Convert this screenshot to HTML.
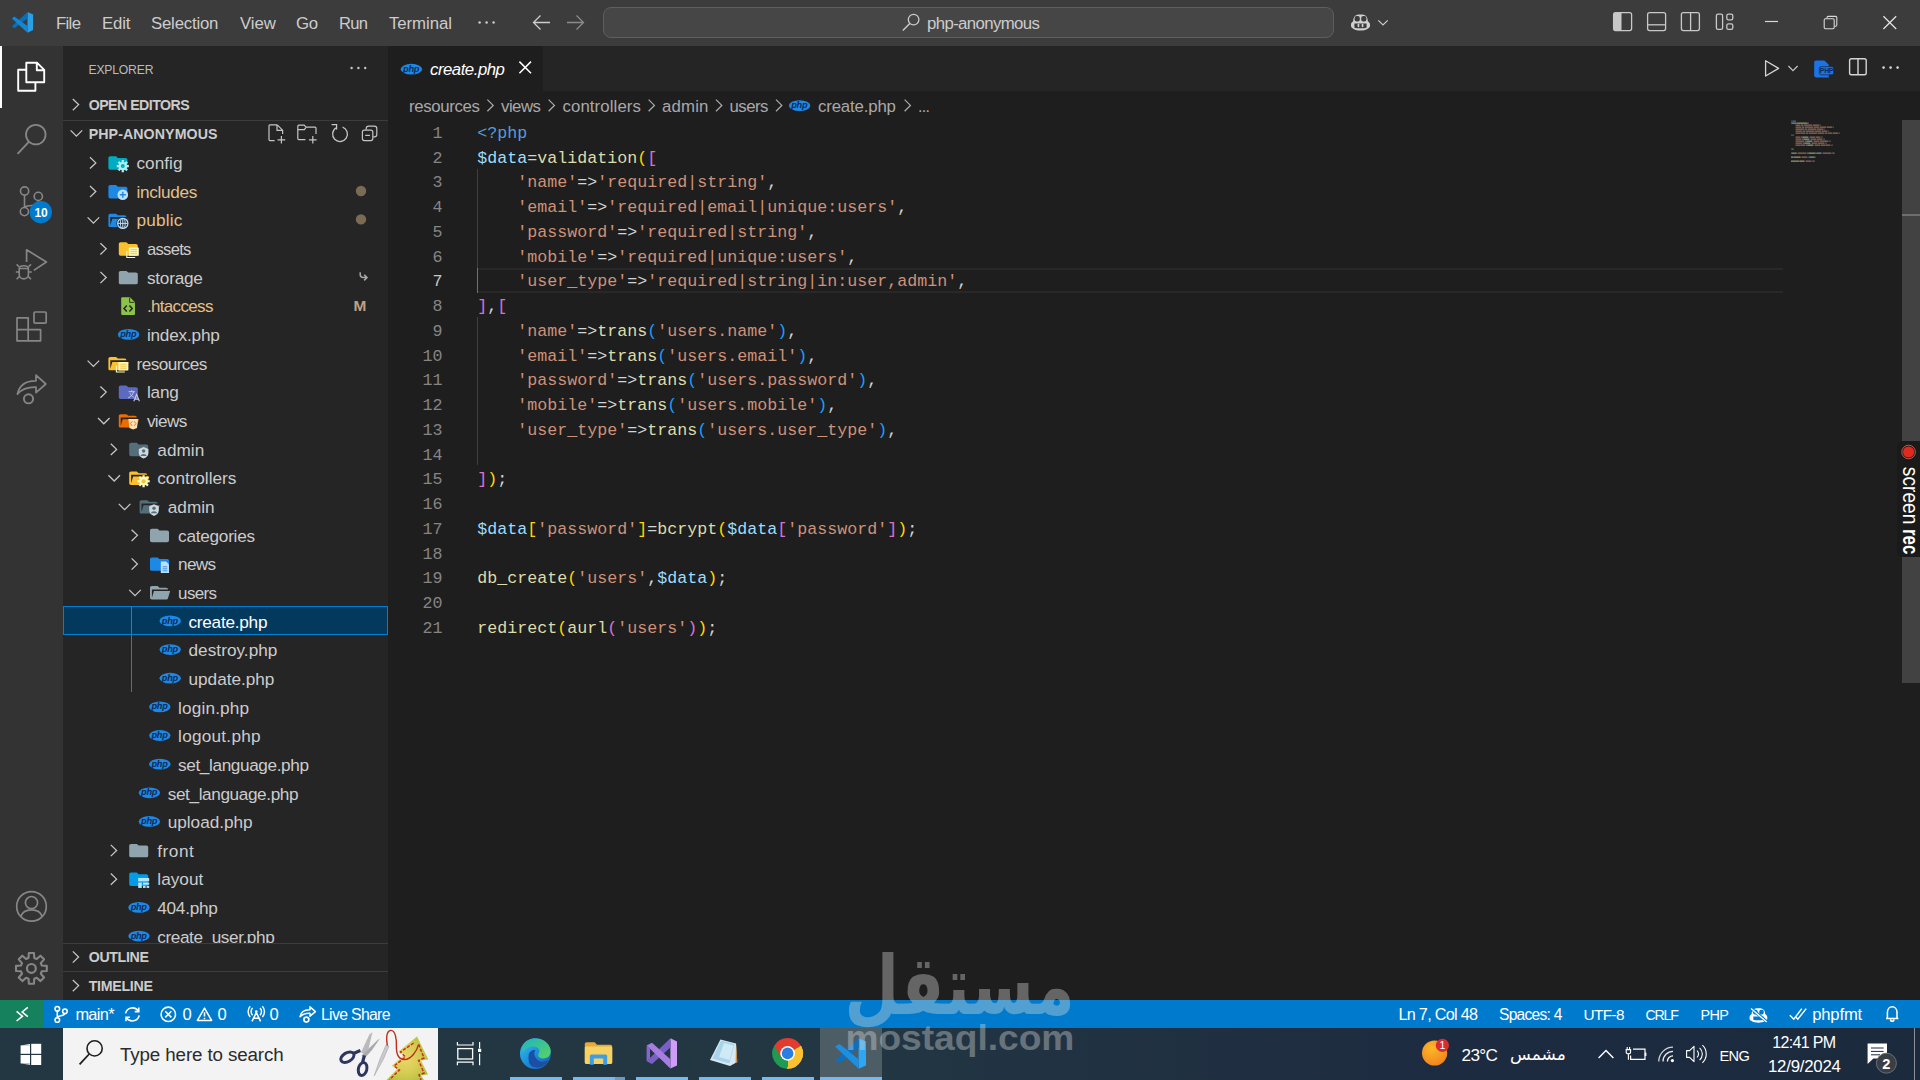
<!DOCTYPE html>
<html lang="en"><head><meta charset="utf-8"><title>create.php - php-anonymous - Visual Studio Code</title>
<style>
html,body{margin:0;padding:0;background:#1e1e1e;overflow:hidden}
#root{position:relative;width:1920px;height:1080px;overflow:hidden;background:#1e1e1e;font-family:"Liberation Sans",sans-serif}
#root div,#root span.t,#root svg,#root pre{position:absolute;display:block}
span.t{white-space:pre}
pre{margin:0}
svg{overflow:visible}
</style></head><body><div id="root">
<div style="left:0px;top:0px;width:1920px;height:46px;background:#3c3c3c;"></div>
<div style="left:0px;top:46px;width:63px;height:954px;background:#333333;"></div>
<div style="left:63px;top:46px;width:325px;height:954px;background:#252526;"></div>
<div style="left:388px;top:46px;width:1532px;height:45px;background:#252526;"></div>
<div style="left:388px;top:46px;width:155px;height:45px;background:#1e1e1e;"></div>
<div style="left:388px;top:91px;width:1532px;height:909px;background:#1e1e1e;"></div>
<div style="left:0px;top:1000px;width:1920px;height:28px;background:#007acc;"></div>
<div style="left:0px;top:1000px;width:44px;height:28px;background:#16825d;"></div>
<div style="left:0px;top:1028px;width:1920px;height:52px;background:linear-gradient(90deg,#233743 0%,#233743 42%,#1d2b40 76%,#1c2a3e 100%);"></div>
<span class="t" style="left:56.00px;top:12.00px;font:normal 400 16.8px/24px 'Liberation Sans',sans-serif;color:#cccccc;letter-spacing:-0.691px;">File</span>
<span class="t" style="left:102.00px;top:12.00px;font:normal 400 16.8px/24px 'Liberation Sans',sans-serif;color:#cccccc;letter-spacing:-0.150px;">Edit</span>
<span class="t" style="left:151.00px;top:12.00px;font:normal 400 16.8px/24px 'Liberation Sans',sans-serif;color:#cccccc;letter-spacing:-0.202px;">Selection</span>
<span class="t" style="left:240.00px;top:12.00px;font:normal 400 16.8px/24px 'Liberation Sans',sans-serif;color:#cccccc;letter-spacing:-0.037px;">View</span>
<span class="t" style="left:296.00px;top:12.00px;font:normal 400 16.8px/24px 'Liberation Sans',sans-serif;color:#cccccc;letter-spacing:-0.411px;">Go</span>
<span class="t" style="left:339.00px;top:12.00px;font:normal 400 16.6px/23px 'Liberation Sans',sans-serif;color:#cccccc;letter-spacing:-0.727px;">Run</span>
<span class="t" style="left:389.00px;top:12.00px;font:normal 400 16.8px/24px 'Liberation Sans',sans-serif;color:#cccccc;letter-spacing:-0.070px;">Terminal</span>
<div style="left:603px;top:7px;width:731px;height:31px;background:#464646;border:1px solid #5e5e5e;border-radius:8px;box-sizing:border-box;"></div>
<span class="t" style="left:927.00px;top:12.00px;font:normal 400 16.8px/24px 'Liberation Sans',sans-serif;color:#cccccc;letter-spacing:-0.624px;">php-anonymous</span>
<span class="t" style="left:88.50px;top:62.00px;font:normal 400 12.2px/17px 'Liberation Sans',sans-serif;color:#bbbbbb;letter-spacing:-0.207px;">EXPLORER</span>
<span class="t" style="left:88.70px;top:95.00px;font:normal 700 14.2px/20px 'Liberation Sans',sans-serif;color:#cccccc;letter-spacing:-0.541px;">OPEN EDITORS</span>
<div style="left:63px;top:120px;width:325px;height:1px;background:#3c3c3c;"></div>
<span class="t" style="left:88.70px;top:124.00px;font:normal 700 14.2px/20px 'Liberation Sans',sans-serif;color:#cccccc;letter-spacing:0.091px;">PHP-ANONYMOUS</span>
<div style="left:63px;top:606px;width:325px;height:29px;background:#04395e;border:1px solid #007fd4;box-sizing:border-box;"></div>
<div style="left:131px;top:606px;width:1px;height:86px;background:#6a6a6a;"></div>
<span class="t" style="left:136.50px;top:151.00px;font:normal 400 17.2px/24px 'Liberation Sans',sans-serif;color:#cccccc;letter-spacing:0.020px;">config</span>
<span class="t" style="left:136.50px;top:180.00px;font:normal 400 17.2px/24px 'Liberation Sans',sans-serif;color:#e2c08d;letter-spacing:-0.301px;">includes</span>
<span class="t" style="left:136.50px;top:208.00px;font:normal 400 17.2px/24px 'Liberation Sans',sans-serif;color:#e2c08d;letter-spacing:0.212px;">public</span>
<span class="t" style="left:146.90px;top:238.00px;font:normal 400 16.6px/23px 'Liberation Sans',sans-serif;color:#cccccc;letter-spacing:-0.695px;">assets</span>
<span class="t" style="left:146.90px;top:266.00px;font:normal 400 17.2px/24px 'Liberation Sans',sans-serif;color:#cccccc;letter-spacing:-0.229px;">storage</span>
<span class="t" style="left:146.90px;top:295.00px;font:normal 400 17.0px/24px 'Liberation Sans',sans-serif;color:#e2c08d;letter-spacing:-0.664px;">.htaccess</span>
<span class="t" style="left:146.90px;top:323.00px;font:normal 400 17.2px/24px 'Liberation Sans',sans-serif;color:#cccccc;letter-spacing:-0.200px;">index.php</span>
<span class="t" style="left:136.50px;top:352.00px;font:normal 400 17.2px/24px 'Liberation Sans',sans-serif;color:#cccccc;letter-spacing:-0.565px;">resources</span>
<span class="t" style="left:146.90px;top:380.00px;font:normal 400 17.2px/24px 'Liberation Sans',sans-serif;color:#cccccc;letter-spacing:-0.173px;">lang</span>
<span class="t" style="left:146.90px;top:409.00px;font:normal 400 17.2px/24px 'Liberation Sans',sans-serif;color:#cccccc;letter-spacing:-0.627px;">views</span>
<span class="t" style="left:157.30px;top:438.00px;font:normal 400 17.2px/24px 'Liberation Sans',sans-serif;color:#cccccc;letter-spacing:0.038px;">admin</span>
<span class="t" style="left:157.30px;top:466.00px;font:normal 400 17.2px/24px 'Liberation Sans',sans-serif;color:#cccccc;letter-spacing:-0.034px;">controllers</span>
<span class="t" style="left:167.70px;top:495.00px;font:normal 400 17.2px/24px 'Liberation Sans',sans-serif;color:#cccccc;letter-spacing:0.038px;">admin</span>
<span class="t" style="left:178.10px;top:524.00px;font:normal 400 17.2px/24px 'Liberation Sans',sans-serif;color:#cccccc;letter-spacing:-0.262px;">categories</span>
<span class="t" style="left:178.10px;top:552.00px;font:normal 400 17.2px/24px 'Liberation Sans',sans-serif;color:#cccccc;letter-spacing:-0.718px;">news</span>
<span class="t" style="left:178.10px;top:582.00px;font:normal 400 17.0px/24px 'Liberation Sans',sans-serif;color:#cccccc;letter-spacing:-0.643px;">users</span>
<span class="t" style="left:188.50px;top:610.00px;font:normal 400 17.2px/24px 'Liberation Sans',sans-serif;color:#ffffff;letter-spacing:-0.254px;">create.php</span>
<span class="t" style="left:188.50px;top:638.00px;font:normal 400 17.2px/24px 'Liberation Sans',sans-serif;color:#cccccc;letter-spacing:0.039px;">destroy.php</span>
<span class="t" style="left:188.50px;top:667.00px;font:normal 400 17.2px/24px 'Liberation Sans',sans-serif;color:#cccccc;letter-spacing:-0.010px;">update.php</span>
<span class="t" style="left:178.10px;top:696.00px;font:normal 400 17.2px/24px 'Liberation Sans',sans-serif;color:#cccccc;letter-spacing:0.148px;">login.php</span>
<span class="t" style="left:178.10px;top:724.00px;font:normal 400 17.2px/24px 'Liberation Sans',sans-serif;color:#cccccc;letter-spacing:0.240px;">logout.php</span>
<span class="t" style="left:178.10px;top:753.00px;font:normal 400 17.2px/24px 'Liberation Sans',sans-serif;color:#cccccc;letter-spacing:-0.385px;">set_language.php</span>
<span class="t" style="left:167.70px;top:782.00px;font:normal 400 17.2px/24px 'Liberation Sans',sans-serif;color:#cccccc;letter-spacing:-0.385px;">set_language.php</span>
<span class="t" style="left:167.70px;top:810.00px;font:normal 400 17.2px/24px 'Liberation Sans',sans-serif;color:#cccccc;letter-spacing:-0.014px;">upload.php</span>
<span class="t" style="left:157.30px;top:839.00px;font:normal 400 17.2px/24px 'Liberation Sans',sans-serif;color:#cccccc;letter-spacing:0.521px;">front</span>
<span class="t" style="left:157.30px;top:867.00px;font:normal 400 17.2px/24px 'Liberation Sans',sans-serif;color:#cccccc;letter-spacing:0.020px;">layout</span>
<span class="t" style="left:157.30px;top:896.00px;font:normal 400 17.2px/24px 'Liberation Sans',sans-serif;color:#cccccc;letter-spacing:-0.279px;">404.php</span>
<span class="t" style="left:157.30px;top:925.00px;font:normal 400 17.2px/24px 'Liberation Sans',sans-serif;color:#cccccc;letter-spacing:-0.419px;">create_user.php</span>
<div style="left:63px;top:943px;width:325px;height:57px;background:#252526;"></div>
<div style="left:63px;top:943px;width:325px;height:1px;background:#3c3c3c;"></div>
<span class="t" style="left:88.70px;top:947.00px;font:normal 700 14.2px/20px 'Liberation Sans',sans-serif;color:#cccccc;letter-spacing:-0.337px;">OUTLINE</span>
<div style="left:63px;top:971px;width:325px;height:1px;background:#3c3c3c;"></div>
<span class="t" style="left:88.70px;top:976.00px;font:normal 700 14.2px/20px 'Liberation Sans',sans-serif;color:#cccccc;letter-spacing:-0.281px;">TIMELINE</span>
<span class="t" style="left:430.00px;top:58.00px;font:italic 400 16.8px/24px 'Liberation Sans',sans-serif;color:#ffffff;letter-spacing:-0.488px;">create.php</span>
<span class="t" style="left:409.00px;top:95.00px;font:normal 400 16.8px/24px 'Liberation Sans',sans-serif;color:#a9a9a9;letter-spacing:-0.346px;">resources</span>
<span class="t" style="left:501.00px;top:95.00px;font:normal 400 16.8px/24px 'Liberation Sans',sans-serif;color:#a9a9a9;letter-spacing:-0.502px;">views</span>
<span class="t" style="left:562.50px;top:95.00px;font:normal 400 16.8px/24px 'Liberation Sans',sans-serif;color:#a9a9a9;letter-spacing:0.100px;">controllers</span>
<span class="t" style="left:662.00px;top:95.00px;font:normal 400 16.8px/24px 'Liberation Sans',sans-serif;color:#a9a9a9;letter-spacing:0.185px;">admin</span>
<span class="t" style="left:729.50px;top:95.00px;font:normal 400 16.8px/24px 'Liberation Sans',sans-serif;color:#a9a9a9;letter-spacing:-0.521px;">users</span>
<span class="t" style="left:818.00px;top:95.00px;font:normal 400 16.8px/24px 'Liberation Sans',sans-serif;color:#a9a9a9;letter-spacing:-0.155px;">create.php</span>
<span class="t" style="left:918.00px;top:96.00px;font:normal 400 16.0px/22px 'Liberation Sans',sans-serif;color:#a9a9a9;letter-spacing:-0.668px;">...</span>
<div style="left:477px;top:268px;width:1306px;height:2px;background:#282828;"></div>
<div style="left:477px;top:291px;width:1306px;height:2px;background:#282828;"></div>
<div style="left:477px;top:169px;width:1px;height:99px;background:#404040;"></div>
<div style="left:477px;top:268px;width:1px;height:25px;background:#707070;"></div>
<div style="left:477px;top:317px;width:1px;height:148px;background:#404040;"></div>
<span class="t" style="left:432.50px;top:122.00px;font:normal 400 16.66px/23px 'Liberation Mono',monospace;color:#858585;letter-spacing:0.003px;">1</span>
<pre style="left:477.3px;top:122.00px;font:16.66px/23px 'Liberation Mono',monospace;letter-spacing:0.003px;"><span style="color:#569cd6">&lt;?php</span></pre>
<span class="t" style="left:432.50px;top:147.00px;font:normal 400 16.66px/23px 'Liberation Mono',monospace;color:#858585;letter-spacing:0.003px;">2</span>
<pre style="left:477.3px;top:147.00px;font:16.66px/23px 'Liberation Mono',monospace;letter-spacing:0.003px;"><span style="color:#9cdcfe">$data</span><span style="color:#d4d4d4">=</span><span style="color:#dcdcaa">validation</span><span style="color:#ffd700">(</span><span style="color:#da70d6">[</span></pre>
<span class="t" style="left:432.50px;top:171.00px;font:normal 400 16.66px/23px 'Liberation Mono',monospace;color:#858585;letter-spacing:0.003px;">3</span>
<pre style="left:477.3px;top:171.00px;font:16.66px/23px 'Liberation Mono',monospace;letter-spacing:0.003px;"><span style="color:#d4d4d4">    </span><span style="color:#ce9178">&#x27;name&#x27;</span><span style="color:#d4d4d4">=&gt;</span><span style="color:#ce9178">&#x27;required|string&#x27;</span><span style="color:#d4d4d4">,</span></pre>
<span class="t" style="left:432.50px;top:196.00px;font:normal 400 16.66px/23px 'Liberation Mono',monospace;color:#858585;letter-spacing:0.003px;">4</span>
<pre style="left:477.3px;top:196.00px;font:16.66px/23px 'Liberation Mono',monospace;letter-spacing:0.003px;"><span style="color:#d4d4d4">    </span><span style="color:#ce9178">&#x27;email&#x27;</span><span style="color:#d4d4d4">=&gt;</span><span style="color:#ce9178">&#x27;required|email|unique:users&#x27;</span><span style="color:#d4d4d4">,</span></pre>
<span class="t" style="left:432.50px;top:221.00px;font:normal 400 16.66px/23px 'Liberation Mono',monospace;color:#858585;letter-spacing:0.003px;">5</span>
<pre style="left:477.3px;top:221.00px;font:16.66px/23px 'Liberation Mono',monospace;letter-spacing:0.003px;"><span style="color:#d4d4d4">    </span><span style="color:#ce9178">&#x27;password&#x27;</span><span style="color:#d4d4d4">=&gt;</span><span style="color:#ce9178">&#x27;required|string&#x27;</span><span style="color:#d4d4d4">,</span></pre>
<span class="t" style="left:432.50px;top:246.00px;font:normal 400 16.66px/23px 'Liberation Mono',monospace;color:#858585;letter-spacing:0.003px;">6</span>
<pre style="left:477.3px;top:246.00px;font:16.66px/23px 'Liberation Mono',monospace;letter-spacing:0.003px;"><span style="color:#d4d4d4">    </span><span style="color:#ce9178">&#x27;mobile&#x27;</span><span style="color:#d4d4d4">=&gt;</span><span style="color:#ce9178">&#x27;required|unique:users&#x27;</span><span style="color:#d4d4d4">,</span></pre>
<span class="t" style="left:432.50px;top:270.00px;font:normal 400 16.66px/23px 'Liberation Mono',monospace;color:#c6c6c6;letter-spacing:0.003px;">7</span>
<pre style="left:477.3px;top:270.00px;font:16.66px/23px 'Liberation Mono',monospace;letter-spacing:0.003px;"><span style="color:#d4d4d4">    </span><span style="color:#ce9178">&#x27;user_type&#x27;</span><span style="color:#d4d4d4">=&gt;</span><span style="color:#ce9178">&#x27;required|string|in:user,admin&#x27;</span><span style="color:#d4d4d4">,</span></pre>
<span class="t" style="left:432.50px;top:295.00px;font:normal 400 16.66px/23px 'Liberation Mono',monospace;color:#858585;letter-spacing:0.003px;">8</span>
<pre style="left:477.3px;top:295.00px;font:16.66px/23px 'Liberation Mono',monospace;letter-spacing:0.003px;"><span style="color:#da70d6">]</span><span style="color:#d4d4d4">,</span><span style="color:#da70d6">[</span></pre>
<span class="t" style="left:432.50px;top:320.00px;font:normal 400 16.66px/23px 'Liberation Mono',monospace;color:#858585;letter-spacing:0.003px;">9</span>
<pre style="left:477.3px;top:320.00px;font:16.66px/23px 'Liberation Mono',monospace;letter-spacing:0.003px;"><span style="color:#d4d4d4">    </span><span style="color:#ce9178">&#x27;name&#x27;</span><span style="color:#d4d4d4">=&gt;</span><span style="color:#dcdcaa">trans</span><span style="color:#179fff">(</span><span style="color:#ce9178">&#x27;users.name&#x27;</span><span style="color:#179fff">)</span><span style="color:#d4d4d4">,</span></pre>
<span class="t" style="left:422.50px;top:345.00px;font:normal 400 16.66px/23px 'Liberation Mono',monospace;color:#858585;letter-spacing:0.003px;">10</span>
<pre style="left:477.3px;top:345.00px;font:16.66px/23px 'Liberation Mono',monospace;letter-spacing:0.003px;"><span style="color:#d4d4d4">    </span><span style="color:#ce9178">&#x27;email&#x27;</span><span style="color:#d4d4d4">=&gt;</span><span style="color:#dcdcaa">trans</span><span style="color:#179fff">(</span><span style="color:#ce9178">&#x27;users.email&#x27;</span><span style="color:#179fff">)</span><span style="color:#d4d4d4">,</span></pre>
<span class="t" style="left:422.50px;top:369.00px;font:normal 400 16.66px/23px 'Liberation Mono',monospace;color:#858585;letter-spacing:0.003px;">11</span>
<pre style="left:477.3px;top:369.00px;font:16.66px/23px 'Liberation Mono',monospace;letter-spacing:0.003px;"><span style="color:#d4d4d4">    </span><span style="color:#ce9178">&#x27;password&#x27;</span><span style="color:#d4d4d4">=&gt;</span><span style="color:#dcdcaa">trans</span><span style="color:#179fff">(</span><span style="color:#ce9178">&#x27;users.password&#x27;</span><span style="color:#179fff">)</span><span style="color:#d4d4d4">,</span></pre>
<span class="t" style="left:422.50px;top:394.00px;font:normal 400 16.66px/23px 'Liberation Mono',monospace;color:#858585;letter-spacing:0.003px;">12</span>
<pre style="left:477.3px;top:394.00px;font:16.66px/23px 'Liberation Mono',monospace;letter-spacing:0.003px;"><span style="color:#d4d4d4">    </span><span style="color:#ce9178">&#x27;mobile&#x27;</span><span style="color:#d4d4d4">=&gt;</span><span style="color:#dcdcaa">trans</span><span style="color:#179fff">(</span><span style="color:#ce9178">&#x27;users.mobile&#x27;</span><span style="color:#179fff">)</span><span style="color:#d4d4d4">,</span></pre>
<span class="t" style="left:422.50px;top:419.00px;font:normal 400 16.66px/23px 'Liberation Mono',monospace;color:#858585;letter-spacing:0.003px;">13</span>
<pre style="left:477.3px;top:419.00px;font:16.66px/23px 'Liberation Mono',monospace;letter-spacing:0.003px;"><span style="color:#d4d4d4">    </span><span style="color:#ce9178">&#x27;user_type&#x27;</span><span style="color:#d4d4d4">=&gt;</span><span style="color:#dcdcaa">trans</span><span style="color:#179fff">(</span><span style="color:#ce9178">&#x27;users.user_type&#x27;</span><span style="color:#179fff">)</span><span style="color:#d4d4d4">,</span></pre>
<span class="t" style="left:422.50px;top:444.00px;font:normal 400 16.66px/23px 'Liberation Mono',monospace;color:#858585;letter-spacing:0.003px;">14</span>
<span class="t" style="left:422.50px;top:468.00px;font:normal 400 16.66px/23px 'Liberation Mono',monospace;color:#858585;letter-spacing:0.003px;">15</span>
<pre style="left:477.3px;top:468.00px;font:16.66px/23px 'Liberation Mono',monospace;letter-spacing:0.003px;"><span style="color:#da70d6">]</span><span style="color:#ffd700">)</span><span style="color:#d4d4d4">;</span></pre>
<span class="t" style="left:422.50px;top:493.00px;font:normal 400 16.66px/23px 'Liberation Mono',monospace;color:#858585;letter-spacing:0.003px;">16</span>
<span class="t" style="left:422.50px;top:518.00px;font:normal 400 16.66px/23px 'Liberation Mono',monospace;color:#858585;letter-spacing:0.003px;">17</span>
<pre style="left:477.3px;top:518.00px;font:16.66px/23px 'Liberation Mono',monospace;letter-spacing:0.003px;"><span style="color:#9cdcfe">$data</span><span style="color:#ffd700">[</span><span style="color:#ce9178">&#x27;password&#x27;</span><span style="color:#ffd700">]</span><span style="color:#d4d4d4">=</span><span style="color:#dcdcaa">bcrypt</span><span style="color:#ffd700">(</span><span style="color:#9cdcfe">$data</span><span style="color:#da70d6">[</span><span style="color:#ce9178">&#x27;password&#x27;</span><span style="color:#da70d6">]</span><span style="color:#ffd700">)</span><span style="color:#d4d4d4">;</span></pre>
<span class="t" style="left:422.50px;top:543.00px;font:normal 400 16.66px/23px 'Liberation Mono',monospace;color:#858585;letter-spacing:0.003px;">18</span>
<span class="t" style="left:422.50px;top:567.00px;font:normal 400 16.66px/23px 'Liberation Mono',monospace;color:#858585;letter-spacing:0.003px;">19</span>
<pre style="left:477.3px;top:567.00px;font:16.66px/23px 'Liberation Mono',monospace;letter-spacing:0.003px;"><span style="color:#dcdcaa">db_create</span><span style="color:#ffd700">(</span><span style="color:#ce9178">&#x27;users&#x27;</span><span style="color:#d4d4d4">,</span><span style="color:#9cdcfe">$data</span><span style="color:#ffd700">)</span><span style="color:#d4d4d4">;</span></pre>
<span class="t" style="left:422.50px;top:592.00px;font:normal 400 16.66px/23px 'Liberation Mono',monospace;color:#858585;letter-spacing:0.003px;">20</span>
<span class="t" style="left:422.50px;top:617.00px;font:normal 400 16.66px/23px 'Liberation Mono',monospace;color:#858585;letter-spacing:0.003px;">21</span>
<pre style="left:477.3px;top:617.00px;font:16.66px/23px 'Liberation Mono',monospace;letter-spacing:0.003px;"><span style="color:#dcdcaa">redirect</span><span style="color:#ffd700">(</span><span style="color:#dcdcaa">aurl</span><span style="color:#da70d6">(</span><span style="color:#ce9178">&#x27;users&#x27;</span><span style="color:#da70d6">)</span><span style="color:#ffd700">)</span><span style="color:#d4d4d4">;</span></pre>
<div style="left:1902px;top:120px;width:18px;height:563px;background:#424242;"></div>
<div style="left:1902px;top:214px;width:18px;height:2px;background:#6e6e6e;"></div>
<span class="t" style="left:75.40px;top:1003.00px;font:normal 400 16.4px/23px 'Liberation Sans',sans-serif;color:#ffffff;letter-spacing:-0.683px;">main*</span>
<span class="t" style="left:182.50px;top:1003.00px;font:normal 400 16.6px/23px 'Liberation Sans',sans-serif;color:#ffffff;">0</span>
<span class="t" style="left:217.50px;top:1003.00px;font:normal 400 16.6px/23px 'Liberation Sans',sans-serif;color:#ffffff;">0</span>
<span class="t" style="left:269.50px;top:1003.00px;font:normal 400 16.6px/23px 'Liberation Sans',sans-serif;color:#ffffff;">0</span>
<span class="t" style="left:321.00px;top:1004.00px;font:normal 400 15.8px/22px 'Liberation Sans',sans-serif;color:#ffffff;letter-spacing:-0.671px;">Live Share</span>
<span class="t" style="left:1398.50px;top:1003.00px;font:normal 400 16.2px/23px 'Liberation Sans',sans-serif;color:#ffffff;letter-spacing:-0.715px;">Ln 7, Col 48</span>
<span class="t" style="left:1499.00px;top:1004.00px;font:normal 400 15.6px/22px 'Liberation Sans',sans-serif;color:#ffffff;letter-spacing:-0.735px;">Spaces: 4</span>
<span class="t" style="left:1583.50px;top:1004.00px;font:normal 400 15.4px/22px 'Liberation Sans',sans-serif;color:#ffffff;letter-spacing:-0.658px;">UTF-8</span>
<span class="t" style="left:1645.50px;top:1005.00px;font:normal 400 14.2px/20px 'Liberation Sans',sans-serif;color:#ffffff;letter-spacing:-1.235px;">CRLF</span>
<span class="t" style="left:1700.40px;top:1005.00px;font:normal 400 14.4px/20px 'Liberation Sans',sans-serif;color:#ffffff;letter-spacing:-0.605px;">PHP</span>
<span class="t" style="left:1812.20px;top:1003.00px;font:normal 400 16.6px/23px 'Liberation Sans',sans-serif;color:#ffffff;letter-spacing:-0.150px;">phpfmt</span>
<div style="left:63px;top:1028px;width:375px;height:52px;background:#f3f3f3;"></div>
<span class="t" style="left:120.00px;top:1042.00px;font:normal 400 18.8px/26px 'Liberation Sans',sans-serif;color:#2b2b2b;letter-spacing:-0.134px;">Type here to search</span>
<div style="left:820px;top:1028px;width:62px;height:49px;background:#4d5d66;"></div>
<div style="left:510px;top:1077px;width:52px;height:3px;background:#76b9ed;"></div>
<div style="left:573px;top:1077px;width:41.5px;height:3px;background:#76b9ed;"></div>
<div style="left:636px;top:1077px;width:52px;height:3px;background:#76b9ed;"></div>
<div style="left:699px;top:1077px;width:52px;height:3px;background:#76b9ed;"></div>
<div style="left:762px;top:1077px;width:52px;height:3px;background:#76b9ed;"></div>
<div style="left:820px;top:1077px;width:62px;height:3px;background:#76b9ed;"></div>
<div style="left:614.5px;top:1077px;width:10.5px;height:3px;background:#6a9bbf;"></div>
<span class="t" style="left:1461.50px;top:1043.00px;font:normal 400 17.2px/24px 'Liberation Sans',sans-serif;color:#ffffff;letter-spacing:-0.644px;">23°C</span>
<span class="t" style="left:1510.00px;top:1042.00px;font:normal 400 17px/24px 'DejaVu Sans','Liberation Sans',sans-serif;color:#ffffff;">مشمس</span>
<span class="t" style="left:1719.40px;top:1046.00px;font:normal 400 14.6px/20px 'Liberation Sans',sans-serif;color:#ffffff;letter-spacing:-0.619px;">ENG</span>
<span class="t" style="left:1772.30px;top:1032.00px;font:normal 400 16.0px/22px 'Liberation Sans',sans-serif;color:#ffffff;letter-spacing:-0.684px;">12:41 PM</span>
<span class="t" style="left:1768.00px;top:1055.00px;font:normal 400 16.8px/24px 'Liberation Sans',sans-serif;color:#ffffff;letter-spacing:-0.218px;">12/9/2024</span>
<div style="left:0px;top:46px;width:2px;height:62px;background:#ffffff;"></div>
<span class="t" style="left:33.60px;top:203.90px;font:normal 700 11.8px/17px 'Liberation Sans',sans-serif;color:#ffffff;letter-spacing:1.674px;">10</span>
<svg style="left:0;top:0" width="1920" height="1080" viewBox="0 0 1920 1080" fill="none" stroke-linecap="butt"><path d="M27.5,11.9 L33.1,14.6 V30.1 L27.5,32.8 Z" fill="#2b9fe6"  /><path d="M27.5,11.9 V18.6 L14.4,28.2 L11.9,26.3 Z" fill="#0a6fb8"  /><path d="M27.5,32.8 V26.1 L14.4,16.5 L11.9,18.4 Z" fill="#1487d4"  /><circle cx="479.6" cy="22.6" r="1.25" fill="#cccccc"  /><circle cx="486.6" cy="22.6" r="1.25" fill="#cccccc"  /><circle cx="493.6" cy="22.6" r="1.25" fill="#cccccc"  /><path d="M533.5,22.5 H550 M540.5,15.5 L533.5,22.5 L540.5,29.5" fill="none" stroke="#cccccc" stroke-width="1.3" /><path d="M567,22.5 H583.5 M576.5,15.5 L583.5,22.5 L576.5,29.5" fill="none" stroke="#8b8b8b" stroke-width="1.3" /><circle cx="913.6" cy="19.6" r="5.3" fill="none" stroke="#cccccc" stroke-width="1.3" /><path d="M909.8,23.4 L902.8,30.6" fill="none" stroke="#cccccc" stroke-width="1.4" /><g transform="translate(1351,13)"><path d="M2.2,8.2 C2.2,3.2 4.6,1.4 9.5,1.4 C14.4,1.4 16.8,3.2 16.8,8.2 C18.2,9 19,10 19,11.4 V13.2 C19,14.6 15,17.6 9.5,17.6 C4,17.6 0,14.6 0,13.2 V11.4 C0,10 0.8,9 2.2,8.2 Z" fill="#d0d0d0"  /><rect x="3.6" y="3" width="5.2" height="5.6" rx="2" fill="#3c3c3c"  /><rect x="10.2" y="3" width="5.2" height="5.6" rx="2" fill="#3c3c3c"  /><path d="M3.4,10.4 H15.6 V14.4 C13,15.6 6,15.6 3.4,14.4 Z" fill="#3c3c3c"  /><rect x="6.6" y="10.8" width="1.7" height="3.4" rx="0.8" fill="#d0d0d0"  /><rect x="10.7" y="10.8" width="1.7" height="3.4" rx="0.8" fill="#d0d0d0"  /></g><path d="M1378.3,20.3 L1383,25 L1387.7,20.3" fill="none" stroke="#cccccc" stroke-width="1.2" /><rect x="1613.6" y="12.6" width="18" height="18" rx="2" fill="none" stroke="#c8c8c8" stroke-width="1.3" /><path d="M1614,13 h7.5 v17.2 h-7.5 z" fill="#c8c8c8"  /><rect x="1647.6" y="12.6" width="18" height="18" rx="2" fill="none" stroke="#c8c8c8" stroke-width="1.3" /><path d="M1648,24.8 H1665.4" fill="none" stroke="#c8c8c8" stroke-width="1.3" /><rect x="1681.4" y="12.6" width="18" height="18" rx="2" fill="none" stroke="#c8c8c8" stroke-width="1.3" /><path d="M1690.6,13 V30.4" fill="none" stroke="#c8c8c8" stroke-width="1.3" /><rect x="1716.4" y="14.2" width="6.2" height="15.2" rx="1.6" fill="none" stroke="#c8c8c8" stroke-width="1.3" /><rect x="1726.8" y="14.2" width="6" height="5.6" rx="1.6" fill="none" stroke="#c8c8c8" stroke-width="1.3" /><rect x="1726.8" y="23.8" width="6" height="5.6" rx="1.6" fill="none" stroke="#c8c8c8" stroke-width="1.3" /><path d="M1765,21.5 H1778" fill="none" stroke="#d8d8d8" stroke-width="1.2" /><rect x="1824.2" y="18.8" width="10" height="10" rx="1.2" fill="none" stroke="#d8d8d8" stroke-width="1.1" /><path d="M1827,18.6 V17.6 Q1827,16.4 1828.2,16.4 H1835.6 Q1836.8,16.4 1836.8,17.6 V25 Q1836.8,26.2 1835.6,26.2 H1834.6" fill="none" stroke="#d8d8d8" stroke-width="1.1" /><path d="M1883.4,16.2 L1896.2,29 M1896.2,16.2 L1883.4,29" fill="none" stroke="#e0e0e0" stroke-width="1.3" /><path d="M26.3,62.8 H37.2 L44.2,69.8 V82.2 H26.3 Z M36.8,63 V70.2 H44" fill="none" stroke="#ffffff" stroke-width="1.9" stroke-linejoin="round"/><path d="M26,69.8 H18.2 V90.8 H35.4 V82.6" fill="none" stroke="#ffffff" stroke-width="1.9" stroke-linejoin="round"/><circle cx="35.8" cy="134.6" r="9.8" fill="none" stroke="#868686" stroke-width="1.8" /><path d="M28.8,141.8 L17.6,153.8" fill="none" stroke="#868686" stroke-width="1.9" /><circle cx="24.6" cy="191" r="4.1" fill="none" stroke="#868686" stroke-width="1.6" /><circle cx="38.3" cy="196.4" r="4.1" fill="none" stroke="#868686" stroke-width="1.6" /><circle cx="24.4" cy="211.6" r="4.1" fill="none" stroke="#868686" stroke-width="1.6" /><path d="M24.5,195.2 V207.4 M38.3,200.6 C38.3,205 34,205.6 30,205.8 C26.5,206 24.5,206.6 24.5,207.6" fill="none" stroke="#868686" stroke-width="1.6" /><circle cx="40.8" cy="212.2" r="11.2" fill="#007acc"  /><path d="M26.6,262 V249.8 L46.4,262 L33.8,270.4" fill="none" stroke="#868686" stroke-width="1.7" stroke-linejoin="round"/><path d="M19.2,268.6 C19.2,264.8 28.4,264.8 28.4,268.6 V274.2 C28.4,280.4 19.2,280.4 19.2,274.2 Z" fill="none" stroke="#868686" stroke-width="1.6" /><path d="M19.2,268.4 H28.4 M19,266.6 L16.6,264.4 M28.6,266.6 L31,264.4 M19,272 H15.8 M28.6,272 H31.8 M19.4,276.4 L16.6,279.2 M28.2,276.4 L31,279.2" fill="none" stroke="#868686" stroke-width="1.5" /><path d="M17,317.8 H28.2 V329.6 H40.6 V340.8 H17 Z M17,329.6 H28.2 V340.8" fill="none" stroke="#868686" stroke-width="1.7" stroke-linejoin="round"/><rect x="34" y="312" width="12.2" height="11.2" rx="1.2" fill="none" stroke="#868686" stroke-width="1.7" /><path d="M17.4,394.2 C19.4,385 26.6,380.6 36,380.8 V375.2 L45.8,384 L36,392.6 V387.2 C28,387 22,388.6 17.4,394.2 Z" fill="none" stroke="#868686" stroke-width="1.7" stroke-linejoin="round"/><circle cx="28.5" cy="398.8" r="4.6" fill="none" stroke="#868686" stroke-width="1.9" /><circle cx="31.5" cy="906.4" r="14.8" fill="none" stroke="#868686" stroke-width="1.7" /><circle cx="31.5" cy="902.6" r="6.1" fill="none" stroke="#868686" stroke-width="1.7" /><path d="M20.8,916.6 C23.6,907.6 39.4,907.6 42.2,916.6" fill="none" stroke="#868686" stroke-width="1.7" /><path d="M28.84,953.01 L33.96,953.01 L34.27,957.99 L36.73,959.01 L40.47,955.71 L44.09,959.33 L40.79,963.07 L41.81,965.53 L46.79,965.84 L46.79,970.96 L41.81,971.27 L40.79,973.73 L44.09,977.47 L40.47,981.09 L36.73,977.79 L34.27,978.81 L33.96,983.79 L28.84,983.79 L28.53,978.81 L26.07,977.79 L22.33,981.09 L18.71,977.47 L22.01,973.73 L20.99,971.27 L16.01,970.96 L16.01,965.84 L20.99,965.53 L22.01,963.07 L18.71,959.33 L22.33,955.71 L26.07,959.01 L28.53,957.99 Z" fill="none" stroke="#868686" stroke-width="2.1" stroke-linejoin="round"/><circle cx="31.4" cy="968.4" r="4.4" fill="none" stroke="#868686" stroke-width="2.2" /><text x="40.9" y="216.6" font-family="'Liberation Sans',sans-serif" font-size="12" font-weight="700" font-style="normal" fill="#ffffff" text-anchor="middle" letter-spacing="-0.3">10</text><circle cx="351.6" cy="68" r="1.2" fill="#c5c5c5"  /><circle cx="358.4" cy="68" r="1.2" fill="#c5c5c5"  /><circle cx="365.2" cy="68" r="1.2" fill="#c5c5c5"  /><path d="M72.80,99.00 L78.60,104.60 L72.80,110.20" fill="none" stroke="#c5c5c5" stroke-width="1.3" /><path d="M70.60,130.40 L76.40,136.20 L82.20,130.40" fill="none" stroke="#c5c5c5" stroke-width="1.3" /><path d="M72.80,951.40 L78.60,957.00 L72.80,962.60" fill="none" stroke="#c5c5c5" stroke-width="1.3" /><path d="M72.80,980.00 L78.60,985.60 L72.80,991.20" fill="none" stroke="#c5c5c5" stroke-width="1.3" /><path d="M277.2,124.8 H270 Q269,124.8 269,125.8 V139.6 Q269,140.6 270,140.6 H274.6 M277.2,124.8 L282.6,130.2 V134 M277,125 V130.4 H282.4" fill="none" stroke="#c5c5c5" stroke-width="1.2" /><path d="M281.4,136 V143.6 M277.6,139.8 H285.2" fill="none" stroke="#c5c5c5" stroke-width="1.2" /><path d="M305.4,139.6 H298.8 Q297.8,139.6 297.8,138.6 V126.2 Q297.8,125.2 298.8,125.2 H304.2 L306,127.2 H315 Q316,127.2 316,128.2 V134 M297.8,129.6 H304.4 L306,127.4" fill="none" stroke="#c5c5c5" stroke-width="1.2" /><path d="M312.8,136 V143.6 M309,139.8 H316.6" fill="none" stroke="#c5c5c5" stroke-width="1.2" /><path d="M336.2,127.8 A7.4,7.4 0 1 0 342.6,127.2" fill="none" stroke="#c5c5c5" stroke-width="1.3" /><path d="M331.6,124.6 H336.6 V129.6" fill="none" stroke="#c5c5c5" stroke-width="1.2" /><rect x="362.4" y="130.2" width="10.4" height="10.4" rx="2" fill="none" stroke="#c5c5c5" stroke-width="1.2" /><path d="M365.2,135.4 H370" fill="none" stroke="#c5c5c5" stroke-width="1.2" /><path d="M366.2,129.8 V128.6 Q366.2,126.2 368.6,126.2 H374.4 Q376.8,126.2 376.8,128.6 V134.4 Q376.8,136.8 374.4,136.8 H373.2" fill="none" stroke="#c5c5c5" stroke-width="1.2" /><clipPath id="treeclip"><rect x="63" y="148" width="325" height="795"/></clipPath><g clip-path="url(#treeclip)"><path d="M90.00,157.30 L95.80,162.90 L90.00,168.50" fill="none" stroke="#c5c5c5" stroke-width="1.3" /><path transform="translate(106.50,152.97) scale(0.95,0.84)" d="M10 4H4c-1.11 0-2 .89-2 2v12a2 2 0 0 0 2 2h16a2 2 0 0 0 2-2V8c0-1.11-.9-2-2-2h-8l-2-2z" fill="#00acc1"/><path d="M121.59,160.02 L124.01,160.02 L123.84,161.93 L125.01,162.41 L126.24,160.94 L127.96,162.66 L126.49,163.89 L126.97,165.06 L128.88,164.89 L128.88,167.31 L126.97,167.14 L126.49,168.31 L127.96,169.54 L126.24,171.26 L125.01,169.79 L123.84,170.27 L124.01,172.18 L121.59,172.18 L121.76,170.27 L120.59,169.79 L119.36,171.26 L117.64,169.54 L119.11,168.31 L118.63,167.14 L116.72,167.31 L116.72,164.89 L118.63,165.06 L119.11,163.89 L117.64,162.66 L119.36,160.94 L120.59,162.41 L121.76,161.93 Z" fill="#b2ebf2"  /><circle cx="122.80000000000001" cy="166.1" r="2" fill="#00acc1"  /><path d="M90.00,185.95 L95.80,191.55 L90.00,197.15" fill="none" stroke="#c5c5c5" stroke-width="1.3" /><path transform="translate(106.50,181.62) scale(0.95,0.84)" d="M10 4H4c-1.11 0-2 .89-2 2v12a2 2 0 0 0 2 2h16a2 2 0 0 0 2-2V8c0-1.11-.9-2-2-2h-8l-2-2z" fill="#1e88e5"/><circle cx="122.80000000000001" cy="194.75" r="5.3" fill="#bbdefb"  /><path d="M119.80000000000001,194.75 H125.80000000000001 M122.80000000000001,191.75 V197.75" fill="none" stroke="#1e88e5" stroke-width="1.4" /><path d="M87.60,217.40 L93.40,223.20 L99.20,217.40" fill="none" stroke="#c5c5c5" stroke-width="1.3" /><path transform="translate(106.50,210.27) scale(0.95,0.84)" d="M19 20H4c-1.11 0-2-.9-2-2V6c0-1.11.89-2 2-2h6l2 2h7a2 2 0 0 1 2 2H4v10l2.14-8h17.07l-2.28 8.5c-.23.87-1.01 1.5-1.93 1.5z" fill="#1e88e5"/><circle cx="122.80000000000001" cy="223.4" r="6.4" fill="#252526"  /><circle cx="122.80000000000001" cy="223.4" r="5.1" fill="none" stroke="#bbdefb" stroke-width="1.2" /><path d="M117.80000000000001,223.4 H127.80000000000001 M122.80000000000001,218.4 V228.4" fill="none" stroke="#bbdefb" stroke-width="1" /><ellipse cx="122.80000000000001" cy="223.4" rx="2.4" ry="5" stroke="#bbdefb" stroke-width="1" fill="none"/><path d="M100.40,243.25 L106.20,248.85 L100.40,254.45" fill="none" stroke="#c5c5c5" stroke-width="1.3" /><path transform="translate(116.90,238.92) scale(0.95,0.84)" d="M10 4H4c-1.11 0-2 .89-2 2v12a2 2 0 0 0 2 2h16a2 2 0 0 0 2-2V8c0-1.11-.9-2-2-2h-8l-2-2z" fill="#fbc02d"/><path d="M126.80000000000001,251.04999999999998 V257.45 H135.20000000000002" fill="none" stroke="#fff9c4" stroke-width="1.1" /><rect x="128.8" y="247.45" width="10" height="8.4" rx="0.6" fill="#fff9c4"  /><path d="M130.60000000000002,249.64999999999998 H137.00000000000003 M130.60000000000002,251.64999999999998 H137.00000000000003 M130.60000000000002,253.64999999999998 H137.00000000000003" fill="none" stroke="#fbc02d" stroke-width="0.9" /><path d="M100.40,271.90 L106.20,277.50 L100.40,283.10" fill="none" stroke="#c5c5c5" stroke-width="1.3" /><path transform="translate(116.90,267.57) scale(0.95,0.84)" d="M10 4H4c-1.11 0-2 .89-2 2v12a2 2 0 0 0 2 2h16a2 2 0 0 0 2-2V8c0-1.11-.9-2-2-2h-8l-2-2z" fill="#90a4ae"/><path d="M122.4,297.15 H130.0 L135.0,302.15 V313.75 Q135.0,314.95 133.8,314.95 H122.4 Q121.2,314.95 121.2,313.75 V298.34999999999997 Q121.2,297.15 122.4,297.15 Z" fill="#8bc34a"  /><path d="M129.6,297.75 V302.34999999999997 H134.4" fill="none" stroke="#252526" stroke-width="0.9" /><path d="M126.8,305.54999999999995 L124.0,308.54999999999995 L126.8,311.54999999999995 M129.4,305.54999999999995 L132.2,308.54999999999995 L129.4,311.54999999999995" fill="none" stroke="#252526" stroke-width="1.5" /><ellipse cx="128.60" cy="334.40" rx="10.7" ry="5.4" fill="#1e88e5"/><text x="128.29999999999998" y="337.0" font-family="'Liberation Sans',sans-serif" font-size="9.2" font-weight="700" font-style="italic" fill="#0f2a55" text-anchor="middle" letter-spacing="-0.25">php</text><path d="M87.60,360.65 L93.40,366.45 L99.20,360.65" fill="none" stroke="#c5c5c5" stroke-width="1.3" /><path transform="translate(106.50,353.52) scale(0.95,0.84)" d="M19 20H4c-1.11 0-2-.9-2-2V6c0-1.11.89-2 2-2h6l2 2h7a2 2 0 0 1 2 2H4v10l2.14-8h17.07l-2.28 8.5c-.23.87-1.01 1.5-1.93 1.5z" fill="#fbc02d"/><path d="M116.4,365.65 V372.04999999999995 H124.80000000000001" fill="none" stroke="#fff9c4" stroke-width="1.1" /><rect x="118.4" y="362.04999999999995" width="10" height="8.4" rx="0.6" fill="#fff9c4"  /><path d="M120.20000000000002,364.25 H126.60000000000001 M120.20000000000002,366.25 H126.60000000000001 M120.20000000000002,368.25 H126.60000000000001" fill="none" stroke="#fbc02d" stroke-width="0.9" /><path d="M100.40,386.50 L106.20,392.10 L100.40,397.70" fill="none" stroke="#c5c5c5" stroke-width="1.3" /><path transform="translate(116.90,382.17) scale(0.95,0.84)" d="M10 4H4c-1.11 0-2 .89-2 2v12a2 2 0 0 0 2 2h16a2 2 0 0 0 2-2V8c0-1.11-.9-2-2-2h-8l-2-2z" fill="#5c6bc0"/><path d="M128.60000000000002,391.7 H134.8 M131.70000000000002,390.3 V391.7 M133.60000000000002,391.7 C132.8,394.7 130.60000000000002,396.7 128.20000000000002,397.90000000000003 M130.00000000000003,393.3 C130.8,395.1 132.20000000000002,396.5 133.8,397.3" fill="none" stroke="#c5cae9" stroke-width="1" /><path d="M133.8,401.3 L136.60000000000002,394.5 L139.4,401.3 M134.8,399.1 H138.4" fill="none" stroke="#c5cae9" stroke-width="1.1" /><path d="M98.00,417.95 L103.80,423.75 L109.60,417.95" fill="none" stroke="#c5c5c5" stroke-width="1.3" /><path transform="translate(116.90,410.82) scale(0.95,0.84)" d="M19 20H4c-1.11 0-2-.9-2-2V6c0-1.11.89-2 2-2h6l2 2h7a2 2 0 0 1 2 2H4v10l2.14-8h17.07l-2.28 8.5c-.23.87-1.01 1.5-1.93 1.5z" fill="#ef6c00"/><path d="M128.4,418.95 H138.00000000000003 L137.00000000000003,427.95 L133.20000000000002,429.55 L129.4,427.95 Z" fill="#ffe0b2"  /><path d="M132.20000000000002,421.34999999999997 L130.4,423.55 L132.20000000000002,425.75 M134.20000000000002,421.34999999999997 L136.00000000000003,423.55 L134.20000000000002,425.75" fill="none" stroke="#ef6c00" stroke-width="0.9" /><path d="M110.80,443.80 L116.60,449.40 L110.80,455.00" fill="none" stroke="#c5c5c5" stroke-width="1.3" /><path transform="translate(127.30,439.47) scale(0.95,0.84)" d="M10 4H4c-1.11 0-2 .89-2 2v12a2 2 0 0 0 2 2h16a2 2 0 0 0 2-2V8c0-1.11-.9-2-2-2h-8l-2-2z" fill="#546e7a"/><path d="M143.60000000000002,447.0 L148.40000000000003,449.0 V453.0 C148.40000000000003,456.0 146.20000000000002,457.8 143.60000000000002,458.6 C141.00000000000003,457.8 138.8,456.0 138.8,453.0 V449.0 Z" fill="#cfd8dc"  /><circle cx="143.60000000000002" cy="451.0" r="1.7" fill="#546e7a"  /><path d="M140.60000000000002,456.0 C140.60000000000002,453.20000000000005 146.60000000000002,453.20000000000005 146.60000000000002,456.0 Z" fill="#546e7a"  /><path d="M108.40,475.25 L114.20,481.05 L120.00,475.25" fill="none" stroke="#c5c5c5" stroke-width="1.3" /><path transform="translate(127.30,468.12) scale(0.95,0.84)" d="M19 20H4c-1.11 0-2-.9-2-2V6c0-1.11.89-2 2-2h6l2 2h7a2 2 0 0 1 2 2H4v10l2.14-8h17.07l-2.28 8.5c-.23.87-1.01 1.5-1.93 1.5z" fill="#fbc02d"/><path d="M142.39,475.17 L144.81,475.17 L144.64,477.08 L145.81,477.56 L147.04,476.09 L148.76,477.81 L147.29,479.04 L147.77,480.21 L149.68,480.04 L149.68,482.46 L147.77,482.29 L147.29,483.46 L148.76,484.69 L147.04,486.41 L145.81,484.94 L144.64,485.42 L144.81,487.33 L142.39,487.33 L142.56,485.42 L141.39,484.94 L140.16,486.41 L138.44,484.69 L139.91,483.46 L139.43,482.29 L137.52,482.46 L137.52,480.04 L139.43,480.21 L139.91,479.04 L138.44,477.81 L140.16,476.09 L141.39,477.56 L142.56,477.08 Z" fill="#fff9c4"  /><circle cx="143.60000000000002" cy="481.25" r="2" fill="#fbc02d"  /><path d="M118.80,503.90 L124.60,509.70 L130.40,503.90" fill="none" stroke="#c5c5c5" stroke-width="1.3" /><path transform="translate(137.70,496.77) scale(0.95,0.84)" d="M19 20H4c-1.11 0-2-.9-2-2V6c0-1.11.89-2 2-2h6l2 2h7a2 2 0 0 1 2 2H4v10l2.14-8h17.07l-2.28 8.5c-.23.87-1.01 1.5-1.93 1.5z" fill="#546e7a"/><path d="M154.00000000000003,504.29999999999995 L158.80000000000004,506.29999999999995 V510.29999999999995 C158.80000000000004,513.3 156.60000000000002,515.1 154.00000000000003,515.9 C151.40000000000003,515.1 149.20000000000002,513.3 149.20000000000002,510.29999999999995 V506.29999999999995 Z" fill="#cfd8dc"  /><circle cx="154.00000000000003" cy="508.29999999999995" r="1.7" fill="#546e7a"  /><path d="M151.00000000000003,513.3 C151.00000000000003,510.5 157.00000000000003,510.5 157.00000000000003,513.3 Z" fill="#546e7a"  /><path d="M131.60,529.75 L137.40,535.35 L131.60,540.95" fill="none" stroke="#c5c5c5" stroke-width="1.3" /><path transform="translate(148.10,525.42) scale(0.95,0.84)" d="M10 4H4c-1.11 0-2 .89-2 2v12a2 2 0 0 0 2 2h16a2 2 0 0 0 2-2V8c0-1.11-.9-2-2-2h-8l-2-2z" fill="#90a4ae"/><path d="M131.60,558.40 L137.40,564.00 L131.60,569.60" fill="none" stroke="#c5c5c5" stroke-width="1.3" /><path transform="translate(148.10,554.07) scale(0.95,0.84)" d="M10 4H4c-1.11 0-2 .89-2 2v12a2 2 0 0 0 2 2h16a2 2 0 0 0 2-2V8c0-1.11-.9-2-2-2h-8l-2-2z" fill="#1e88e5"/><path d="M160.8,561.5999999999999 H166.20000000000002 L169.0,564.4 V572.9999999999999 H160.8 Z" fill="#bbdefb"  /><path d="M162.6,566.8 H167.20000000000002 M162.6,568.8 H167.20000000000002 M162.6,570.8 H167.20000000000002" fill="none" stroke="#1e88e5" stroke-width="0.8" /><path d="M129.20,589.85 L135.00,595.65 L140.80,589.85" fill="none" stroke="#c5c5c5" stroke-width="1.3" /><path transform="translate(148.10,582.72) scale(0.95,0.84)" d="M19 20H4c-1.11 0-2-.9-2-2V6c0-1.11.89-2 2-2h6l2 2h7a2 2 0 0 1 2 2H4v10l2.14-8h17.07l-2.28 8.5c-.23.87-1.01 1.5-1.93 1.5z" fill="#90a4ae"/><ellipse cx="170.20" cy="620.90" rx="10.7" ry="5.4" fill="#1e88e5"/><text x="169.89999999999998" y="623.5" font-family="'Liberation Sans',sans-serif" font-size="9.2" font-weight="700" font-style="italic" fill="#0f2a55" text-anchor="middle" letter-spacing="-0.25">php</text><ellipse cx="170.20" cy="649.55" rx="10.7" ry="5.4" fill="#1e88e5"/><text x="169.89999999999998" y="652.15" font-family="'Liberation Sans',sans-serif" font-size="9.2" font-weight="700" font-style="italic" fill="#0f2a55" text-anchor="middle" letter-spacing="-0.25">php</text><ellipse cx="170.20" cy="678.20" rx="10.7" ry="5.4" fill="#1e88e5"/><text x="169.89999999999998" y="680.8" font-family="'Liberation Sans',sans-serif" font-size="9.2" font-weight="700" font-style="italic" fill="#0f2a55" text-anchor="middle" letter-spacing="-0.25">php</text><ellipse cx="159.80" cy="706.85" rx="10.7" ry="5.4" fill="#1e88e5"/><text x="159.5" y="709.45" font-family="'Liberation Sans',sans-serif" font-size="9.2" font-weight="700" font-style="italic" fill="#0f2a55" text-anchor="middle" letter-spacing="-0.25">php</text><ellipse cx="159.80" cy="735.50" rx="10.7" ry="5.4" fill="#1e88e5"/><text x="159.5" y="738.1" font-family="'Liberation Sans',sans-serif" font-size="9.2" font-weight="700" font-style="italic" fill="#0f2a55" text-anchor="middle" letter-spacing="-0.25">php</text><ellipse cx="159.80" cy="764.15" rx="10.7" ry="5.4" fill="#1e88e5"/><text x="159.5" y="766.75" font-family="'Liberation Sans',sans-serif" font-size="9.2" font-weight="700" font-style="italic" fill="#0f2a55" text-anchor="middle" letter-spacing="-0.25">php</text><ellipse cx="149.40" cy="792.80" rx="10.7" ry="5.4" fill="#1e88e5"/><text x="149.1" y="795.4" font-family="'Liberation Sans',sans-serif" font-size="9.2" font-weight="700" font-style="italic" fill="#0f2a55" text-anchor="middle" letter-spacing="-0.25">php</text><ellipse cx="149.40" cy="821.45" rx="10.7" ry="5.4" fill="#1e88e5"/><text x="149.1" y="824.05" font-family="'Liberation Sans',sans-serif" font-size="9.2" font-weight="700" font-style="italic" fill="#0f2a55" text-anchor="middle" letter-spacing="-0.25">php</text><path d="M110.80,844.90 L116.60,850.50 L110.80,856.10" fill="none" stroke="#c5c5c5" stroke-width="1.3" /><path transform="translate(127.30,840.57) scale(0.95,0.84)" d="M10 4H4c-1.11 0-2 .89-2 2v12a2 2 0 0 0 2 2h16a2 2 0 0 0 2-2V8c0-1.11-.9-2-2-2h-8l-2-2z" fill="#90a4ae"/><path d="M110.80,873.55 L116.60,879.15 L110.80,884.75" fill="none" stroke="#c5c5c5" stroke-width="1.3" /><path transform="translate(127.30,869.22) scale(0.95,0.84)" d="M10 4H4c-1.11 0-2 .89-2 2v12a2 2 0 0 0 2 2h16a2 2 0 0 0 2-2V8c0-1.11-.9-2-2-2h-8l-2-2z" fill="#039be5"/><rect x="138.20000000000002" y="877.95" width="11" height="3.4" rx="0" fill="#b3e5fc"  /><rect x="138.20000000000002" y="882.5500000000001" width="3.6" height="5.4" rx="0" fill="#b3e5fc"  /><rect x="143.00000000000003" y="882.5500000000001" width="6.2" height="2.2" rx="0" fill="#b3e5fc"  /><rect x="143.00000000000003" y="885.75" width="2.6" height="2.2" rx="0" fill="#b3e5fc"  /><rect x="146.60000000000002" y="885.75" width="2.6" height="2.2" rx="0" fill="#b3e5fc"  /><ellipse cx="139.00" cy="907.40" rx="10.7" ry="5.4" fill="#1e88e5"/><text x="138.7" y="910.0" font-family="'Liberation Sans',sans-serif" font-size="9.2" font-weight="700" font-style="italic" fill="#0f2a55" text-anchor="middle" letter-spacing="-0.25">php</text><ellipse cx="139.00" cy="936.05" rx="10.7" ry="5.4" fill="#1e88e5"/><text x="138.7" y="938.65" font-family="'Liberation Sans',sans-serif" font-size="9.2" font-weight="700" font-style="italic" fill="#0f2a55" text-anchor="middle" letter-spacing="-0.25">php</text></g><circle cx="361" cy="191" r="5.2" fill="#7a6b52"  /><circle cx="361" cy="219.4" r="5.2" fill="#7a6b52"  /><text x="353.4" y="310.6" font-family="'Liberation Sans',sans-serif" font-size="15.4" font-weight="700" font-style="normal" fill="#bda28a" text-anchor="start" >M</text><path d="M360.2,272.2 V274.6 Q360.2,277.6 363.2,277.6 H366.6 M364.2,274.8 L367,277.6 L364.2,280.4" fill="none" stroke="#a8a8a8" stroke-width="1.5" /><ellipse cx="411.40" cy="69.20" rx="10.7" ry="5.4" fill="#1e88e5"/><text x="411.09999999999997" y="71.8" font-family="'Liberation Sans',sans-serif" font-size="9.2" font-weight="700" font-style="italic" fill="#0f2a55" text-anchor="middle" letter-spacing="-0.25">php</text><path d="M519.4,61.6 L531,73.2 M531,61.6 L519.4,73.2" fill="none" stroke="#ffffff" stroke-width="1.5" /><path d="M1765.6,60.8 V76 L1778.6,68.4 Z" fill="none" stroke="#d4d4d4" stroke-width="1.3" stroke-linejoin="round"/><path d="M1788.4,66 L1793,70.6 L1797.6,66" fill="none" stroke="#c5c5c5" stroke-width="1.2" /><path d="M1816,60.4 H1824.4 L1828.8,64.8 V77.4 H1816 Q1814.2,77.4 1814.2,75.6 V62.2 Q1814.2,60.4 1816,60.4 Z" fill="#1a73e8"  /><rect x="1819.4" y="66.6" width="14.2" height="8.2" rx="1.6" fill="#1a73e8" stroke="#1f1f1f" stroke-width="0.6" /><text x="1826.5" y="73.4" font-family="'Liberation Sans',sans-serif" font-size="6.8" font-weight="700" font-style="normal" fill="#0b2a5c" text-anchor="middle" letter-spacing="-0.2">PHP</text><rect x="1849.6" y="58.8" width="16.6" height="16" rx="1.8" fill="none" stroke="#d4d4d4" stroke-width="1.4" /><path d="M1858,59 V74.8" fill="none" stroke="#d4d4d4" stroke-width="1.4" /><circle cx="1883.6" cy="67.6" r="1.3" fill="#d4d4d4"  /><circle cx="1890.6" cy="67.6" r="1.3" fill="#d4d4d4"  /><circle cx="1897.6" cy="67.6" r="1.3" fill="#d4d4d4"  /><path d="M487.4,99.60000000000001 L493.2,105.4 L487.4,111.2" fill="none" stroke="#a8a8a8" stroke-width="1.3" /><path d="M548.6,99.60000000000001 L554.4,105.4 L548.6,111.2" fill="none" stroke="#a8a8a8" stroke-width="1.3" /><path d="M648.6,99.60000000000001 L654.4,105.4 L648.6,111.2" fill="none" stroke="#a8a8a8" stroke-width="1.3" /><path d="M716,99.60000000000001 L721.8,105.4 L716,111.2" fill="none" stroke="#a8a8a8" stroke-width="1.3" /><path d="M776,99.60000000000001 L781.8,105.4 L776,111.2" fill="none" stroke="#a8a8a8" stroke-width="1.3" /><path d="M904.6,99.60000000000001 L910.4,105.4 L904.6,111.2" fill="none" stroke="#a8a8a8" stroke-width="1.3" /><ellipse cx="799.60" cy="105.60" rx="10.7" ry="5.4" fill="#1e88e5"/><text x="799.3000000000001" y="108.19999999999999" font-family="'Liberation Sans',sans-serif" font-size="9.2" font-weight="700" font-style="italic" fill="#0f2a55" text-anchor="middle" letter-spacing="-0.25">php</text><path d="M16.6,1011.4 L22.4,1016.2 L16.6,1021 M27.8,1007.4 L22.2,1012 L27.8,1016.6" fill="none" stroke="#ffffff" stroke-width="1.6" /><circle cx="57.3" cy="1008.8" r="2.3" fill="none" stroke="#ffffff" stroke-width="1.55" /><circle cx="57.3" cy="1020" r="2.3" fill="none" stroke="#ffffff" stroke-width="1.55" /><circle cx="64.9" cy="1011.2" r="2.3" fill="none" stroke="#ffffff" stroke-width="1.55" /><path d="M57.3,1011.2 V1017.6 M64.9,1013.6 C64.9,1016.4 57.4,1015.2 57.4,1017.6" fill="none" stroke="#ffffff" stroke-width="1.55" /><path d="M125.6,1013.4 A7,7 0 0 1 138.4,1011.2 M139.2,1015.4 A7,7 0 0 1 126.4,1017.6" fill="none" stroke="#ffffff" stroke-width="1.6" /><path d="M138.8,1007.6 V1011.6 H134.8 M126,1021.2 V1017.2 H130" fill="none" stroke="#ffffff" stroke-width="1.55" /><circle cx="168.3" cy="1014.3" r="7.2" fill="none" stroke="#ffffff" stroke-width="1.55" /><path d="M165.2,1011.2 L171.4,1017.4 M171.4,1011.2 L165.2,1017.4" fill="none" stroke="#ffffff" stroke-width="1.55" /><path d="M204.5,1008.2 L211.6,1020.4 H197.4 Z" fill="none" stroke="#ffffff" stroke-width="1.55" stroke-linejoin="round"/><path d="M204.5,1012.2 V1016.6 M204.5,1017.8 V1019.2" fill="none" stroke="#ffffff" stroke-width="1.55" /><path d="M256.3,1012.6 L252,1021.4 M256.3,1012.6 L260.6,1021.4 M253.6,1018.2 H259" fill="none" stroke="#ffffff" stroke-width="1.55" /><circle cx="256.3" cy="1011.6" r="1.3" fill="#ffffff"  /><path d="M252.6,1008 A5,5 0 0 0 252.6,1015.2 M260,1008 A5,5 0 0 1 260,1015.2 M250.2,1006.2 A8,8 0 0 0 250.2,1017 M262.4,1006.2 A8,8 0 0 1 262.4,1017" fill="none" stroke="#ffffff" stroke-width="1.45" /><path d="M300,1016.8 C301,1011.8 305,1009.6 310,1009.8 V1006.8 L315.4,1011.6 L310,1016.2 V1013.2 C305.6,1013 302.6,1014 300,1016.8 Z" fill="none" stroke="#ffffff" stroke-width="1.55" stroke-linejoin="round"/><circle cx="306.4" cy="1019.6" r="2.5" fill="none" stroke="#ffffff" stroke-width="1.6" /><g transform="translate(1749.6,1007.2) scale(0.93)"><path d="M2.2,7.6 C2.2,3 4.6,1 9.5,1 C14.4,1 16.8,3 16.8,7.6 C18.2,8.4 19,9.4 19,10.8 V12.6 C19,14 15,16.6 9.5,16.6 C4,16.6 0,14 0,12.6 V10.8 C0,9.4 0.8,8.4 2.2,7.6 Z" fill="#ffffff"  /><rect x="3.8" y="2.8" width="4.8" height="5" rx="1.8" fill="#007acc"  /><rect x="10.4" y="2.8" width="4.8" height="5" rx="1.8" fill="#007acc"  /><path d="M4,10 H15 V13.4 C12.6,14.4 6.4,14.4 4,13.4 Z" fill="#007acc"  /><path d="M1,0.6 L18.6,15.8" fill="none" stroke="#007acc" stroke-width="3.2" /><path d="M1.6,1.4 L18.4,16" fill="none" stroke="#ffffff" stroke-width="1.5" /></g><path d="M1789.8,1015.2 L1793.8,1019.2 L1801.8,1008.6 M1795.8,1017 L1797.8,1019.2 L1806.2,1008.6" fill="none" stroke="#ffffff" stroke-width="1.45" /><path d="M1886,1018.4 H1898.4 M1887.4,1018.2 V1012.6 C1887.4,1004.8 1897,1004.8 1897,1012.6 V1018.2 M1890.6,1019.4 C1890.6,1021.8 1893.8,1021.8 1893.8,1019.4" fill="none" stroke="#ffffff" stroke-width="1.55" /><rect x="20.6" y="1045.4" width="9.4" height="8.4" rx="0" fill="#ffffff"  /><rect x="31.2" y="1043.8" width="10" height="10" rx="0" fill="#ffffff"  /><rect x="20.6" y="1055" width="9.4" height="8.4" rx="0" fill="#ffffff"  /><rect x="31.2" y="1055" width="10" height="10" rx="0" fill="#ffffff"  /><path d="M20.6,1045.4 L30,1044 V1045.4 Z M20.6,1063.4 L30,1064.8 V1063.4 Z" fill="#ffffff"  /><circle cx="94.6" cy="1048.4" r="7.6" fill="none" stroke="#1f1f1f" stroke-width="1.6" /><path d="M89.2,1054 L79.6,1064.4" fill="none" stroke="#1f1f1f" stroke-width="1.8" /><defs><radialGradient id="tree" cx="0.45" cy="0.5" r="0.6"><stop offset="0" stop-color="#ecd66a"/><stop offset="0.6" stop-color="#d4cc52"/><stop offset="1" stop-color="#b4c242"/></radialGradient></defs><path d="M361,1052.6 L369.4,1034.6 L372.4,1032.2 L368.4,1049.6 L365,1054.6 Z" fill="#b9b9be"  /><path d="M361.6,1055.4 L377.6,1040 L380,1038.6 L372,1050 L364.4,1058.4 Z" fill="#a9a9b0"  /><ellipse cx="347.4" cy="1057.2" rx="7.2" ry="4.4" transform="rotate(-30 347.4 1057.2)" stroke="#2e3560" stroke-width="3" fill="none"/><ellipse cx="362.6" cy="1069" rx="4.2" ry="6.6" transform="rotate(14 362.6 1069)" stroke="#2e3560" stroke-width="3" fill="none"/><path d="M353.4,1053.4 L360.4,1050.6 M362.6,1062.4 L364.4,1055.4" fill="none" stroke="#2e3560" stroke-width="3.2" /><path d="M386.2,1044.6 L389,1046.2 L383,1060 L374.2,1075.8 L380,1059 Z" fill="#c9c9ce" stroke="#9a9aa0" stroke-width="0.5" /><path d="M417,1036.6 L428.4,1059.6 L421,1060.6 L428,1074.6 L421,1075.6 L424,1080 H386.6 L397.6,1068.4 L391.6,1066 L404.6,1054.6 L398.6,1051.6 Z" fill="url(#tree)"  /><path d="M413.6,1043 L400.4,1052 L405.4,1057 L394,1066 L399.4,1070 L389.6,1079.6" fill="none" stroke="#c0341e" stroke-width="1.5" stroke-dasharray="3.2 1.6"/><path d="M418.6,1044.4 L424,1058 L418.6,1060.4 L424,1073 L419,1075 L421,1080" fill="none" stroke="#c0341e" stroke-width="1.5" stroke-dasharray="3.2 1.6"/><path d="M387.4,1045.6 C385.4,1034 388,1030.4 391,1030.4 C395.6,1030.4 396.6,1040 396.4,1046 C396.2,1054 398.4,1059.4 404.6,1059.6 C411,1059.4 416.4,1052 418.6,1044.6" fill="none" stroke="#b8301c" stroke-width="1.4" /><path d="M457.4,1042 V1045 H473 V1042 M457.4,1065.2 V1062.2 H473 V1065.2" fill="none" stroke="#ffffff" stroke-width="1.2" /><rect x="457.8" y="1048.6" width="14.8" height="10.4" rx="0" fill="none" stroke="#ffffff" stroke-width="1.3" /><path d="M479.6,1042 V1048.6 M479.6,1053.4 V1065.2" fill="none" stroke="#ffffff" stroke-width="1.2" /><rect x="478" y="1048.8" width="3.2" height="3.2" rx="0" fill="#ffffff"  /><defs><linearGradient id="eg" x1="0" y1="0" x2="1" y2="1"><stop offset="0" stop-color="#35c1f1"/><stop offset="0.5" stop-color="#1b8fdb"/><stop offset="1" stop-color="#1356b8"/></linearGradient><linearGradient id="eg2" x1="0" y1="0" x2="1" y2="1"><stop offset="0" stop-color="#1fb4c4"/><stop offset="1" stop-color="#5bd35b"/></linearGradient></defs><circle cx="535.4" cy="1053.6" r="15.4" fill="url(#eg)"  /><path d="M524,1043.4 C530,1036 546,1036.4 550.2,1048 C552,1054 549,1059 542,1058.4 C538,1058 537.6,1055 539,1052.6 C540.4,1050 538,1046.6 533,1046.6 C529,1046.6 525,1049 523,1053 C522,1049 522.4,1046 524,1043.4 Z" fill="url(#eg2)"  /><path d="M528.6,1056 C528.6,1052 532,1049.4 535.6,1050 C533.6,1052 534,1056 537,1059.4 C540,1062.4 545,1062.4 548.6,1060 C546,1066 538,1069.6 531.6,1066 C528.6,1063.6 528.4,1059.6 528.6,1056 Z" fill="#1a4fa3"  /><path d="M584.8,1044 Q584.8,1042.2 586.6,1042.2 H594.6 L597,1044.8 H610.4 Q612.2,1044.8 612.2,1046.6 V1062.2 Q612.2,1064 610.4,1064 H586.6 Q584.8,1064 584.8,1062.2 Z" fill="#e7a83c"  /><rect x="584.8" y="1046.4" width="27.4" height="17.6" rx="1.4" fill="#f6d264"  /><path d="M589.8,1064.8 V1056 Q589.8,1054.4 591.4,1054.4 H605.6 Q607.2,1054.4 607.2,1056 V1064.8 H603.2 V1058.6 H593.8 V1064.8 Z" fill="#3c9ee6"  /><path d="M670.4,1038.2 L677,1041.4 V1065.4 L670.4,1068.6 Z" fill="#cf9cf7"  /><path d="M670.4,1038.2 V1047.6 L652,1064 L646.6,1061.2 Z" fill="#7a5fc4"  /><path d="M670.4,1068.6 V1059.2 L652,1042.8 L646.6,1045.6 Z" fill="#a77de0"  /><path d="M646.6,1045.6 L650,1048.6 V1058.2 L646.6,1061.2 Z" fill="#8866cc"  /><path d="M720.4,1039.4 L736,1043.4 L737.2,1062 L730,1066 L710,1060 Z" fill="#d9e7ee"  /><path d="M721,1040.6 L734.6,1044.2 L729.4,1063.6 L712.4,1058.6 Z" fill="#a8d4ea"  /><path d="M724,1043 L733.6,1045.4 L729.6,1060 L719,1057 Z" fill="#cfe9f5"  /><path d="M736,1043.4 L737.4,1062 L735.6,1063 Z" fill="#c98a4a"  /><path d="M787.6,1053.4 L774.26,1045.70 A15.4,15.4 0 0 1 800.94,1045.70 Z" fill="#e33b2e"  /><path d="M787.6,1053.4 L800.94,1045.70 A15.4,15.4 0 0 1 787.60,1068.80 Z" fill="#f9c22e"  /><path d="M787.6,1053.4 L787.60,1068.80 A15.4,15.4 0 0 1 774.26,1045.70 Z" fill="#1e9a52"  /><path d="M774.26,1045.70 L781.00,1057.00 L787.60,1046.00 H800.90 L800.94,1045.70 Z" fill="#e33b2e"  /><path d="M800.94,1045.70 L794.20,1057.00 L786.60,1068.40 L787.60,1068.80 A15.4,15.4 0 0 0 800.94,1045.70 Z" fill="#f9c22e"  /><circle cx="787.6" cy="1053.4" r="7.3" fill="#ffffff"  /><circle cx="787.6" cy="1053.4" r="5.8" fill="#2a7de1"  /><path d="M858.6,1038.2 L866,1041.6 V1065.4 L858.6,1068.8 Z" fill="#2da7f4"  /><path d="M858.6,1038.2 V1047.8 L839.6,1063 L835,1060.4 Z" fill="#0f6fbd"  /><path d="M858.6,1068.8 V1059.2 L839.6,1044 L835,1046.6 Z" fill="#1c8fe0"  /><defs><radialGradient id="sun" cx="0.4" cy="0.3" r="0.8"><stop offset="0" stop-color="#fbb829"/><stop offset="1" stop-color="#f07f1c"/></radialGradient></defs><circle cx="1434.6" cy="1053" r="12.6" fill="url(#sun)"  /><circle cx="1442.4" cy="1045.4" r="6.6" fill="#d92c2c"  /><text x="1442.4" y="1049.4" font-family="'Liberation Sans',sans-serif" font-size="10.6" font-weight="400" font-style="normal" fill="#ffffff" text-anchor="middle" >1</text><path d="M1598.6,1058 L1606,1050.4 L1613.4,1058" fill="none" stroke="#ffffff" stroke-width="1.4" /><path d="M1633,1049.2 H1645 V1059.4 H1630.6 V1055.6" fill="none" stroke="#ffffff" stroke-width="1.2" /><path d="M1645.6,1052.6 V1056" fill="none" stroke="#ffffff" stroke-width="1.6" /><path d="M1627.2,1047 V1049.4 M1629.6,1047 V1049.4 M1626.2,1049.6 H1630.6 V1052 Q1630.6,1053.8 1628.4,1053.8 Q1626.2,1053.8 1626.2,1052 Z M1628.4,1053.8 V1059.8" fill="none" stroke="#ffffff" stroke-width="1.1" /><path d="M1658.8,1061.4 A14.2,14.2 0 0 1 1673,1047.2" fill="none" stroke="#ffffff" stroke-width="1.3" opacity="0.8"/><path d="M1663.0,1061.4 A10,10 0 0 1 1673,1051.4" fill="none" stroke="#ffffff" stroke-width="1.3" opacity="0.9"/><path d="M1667.4,1061.4 A5.6,5.6 0 0 1 1673,1055.8" fill="none" stroke="#ffffff" stroke-width="1.3" opacity="1"/><circle cx="1672.4" cy="1060.6" r="1.6" fill="#ffffff"  /><path d="M1686.6,1050.6 H1689.6 L1694,1046.4 V1061.6 L1689.6,1057.4 H1686.6 Z" fill="none" stroke="#ffffff" stroke-width="1.1" stroke-linejoin="round"/><path d="M1697,1050.6 A4.6,4.6 0 0 1 1697,1057.4 M1699.6,1047.8 A8.4,8.4 0 0 1 1699.6,1060.2 M1702.4,1045.2 A12,12 0 0 1 1702.4,1062.8" fill="none" stroke="#ffffff" stroke-width="1.1" /><path d="M1867.6,1043.6 H1887 V1058.6 H1873.4 L1867.6,1064 Z" fill="#ffffff"  /><path d="M1871,1048 H1883.6 M1871,1051.4 H1883.6 M1871,1054.8 H1880" fill="none" stroke="#1c2a3e" stroke-width="1" /><circle cx="1886.4" cy="1063.2" r="10" fill="#3a3f45" stroke="#6a6f75" stroke-width="1" /><text x="1886.4" y="1068.6" font-family="'Liberation Sans',sans-serif" font-size="14.6" font-weight="700" font-style="normal" fill="#ffffff" text-anchor="middle" >2</text><rect x="1914" y="1028" width="1" height="52" rx="0" fill="#8a9099"  /><rect x="1791.0" y="120.5" width="2.0" height="1.3" rx="0" fill="#569cd6"  opacity="0.45"/><rect x="1793.0" y="120.5" width="3.0" height="1.3" rx="0" fill="#569cd6"  opacity="0.62"/><rect x="1791.0" y="122.5" width="1.0" height="1.3" rx="0" fill="#9cdcfe"  opacity="0.45"/><rect x="1792.0" y="122.5" width="4.0" height="1.3" rx="0" fill="#9cdcfe"  opacity="0.62"/><rect x="1796.0" y="122.5" width="1.0" height="1.3" rx="0" fill="#d4d4d4"  opacity="0.45"/><rect x="1797.0" y="122.5" width="10.0" height="1.3" rx="0" fill="#dcdcaa"  opacity="0.62"/><rect x="1807.0" y="122.5" width="1.0" height="1.3" rx="0" fill="#ffd700"  opacity="0.45"/><rect x="1808.0" y="122.5" width="1.0" height="1.3" rx="0" fill="#da70d6"  opacity="0.45"/><rect x="1795.0" y="124.5" width="1.0" height="1.3" rx="0" fill="#ce9178"  opacity="0.28"/><rect x="1796.0" y="124.5" width="4.0" height="1.3" rx="0" fill="#ce9178"  opacity="0.62"/><rect x="1800.0" y="124.5" width="1.0" height="1.3" rx="0" fill="#ce9178"  opacity="0.28"/><rect x="1801.0" y="124.5" width="2.0" height="1.3" rx="0" fill="#d4d4d4"  opacity="0.45"/><rect x="1803.0" y="124.5" width="1.0" height="1.3" rx="0" fill="#ce9178"  opacity="0.28"/><rect x="1804.0" y="124.5" width="8.0" height="1.3" rx="0" fill="#ce9178"  opacity="0.62"/><rect x="1812.0" y="124.5" width="1.0" height="1.3" rx="0" fill="#ce9178"  opacity="0.28"/><rect x="1813.0" y="124.5" width="6.0" height="1.3" rx="0" fill="#ce9178"  opacity="0.62"/><rect x="1819.0" y="124.5" width="1.0" height="1.3" rx="0" fill="#ce9178"  opacity="0.28"/><rect x="1820.0" y="124.5" width="1.0" height="1.3" rx="0" fill="#d4d4d4"  opacity="0.28"/><rect x="1795.0" y="126.5" width="1.0" height="1.3" rx="0" fill="#ce9178"  opacity="0.28"/><rect x="1796.0" y="126.5" width="5.0" height="1.3" rx="0" fill="#ce9178"  opacity="0.62"/><rect x="1801.0" y="126.5" width="1.0" height="1.3" rx="0" fill="#ce9178"  opacity="0.28"/><rect x="1802.0" y="126.5" width="2.0" height="1.3" rx="0" fill="#d4d4d4"  opacity="0.45"/><rect x="1804.0" y="126.5" width="1.0" height="1.3" rx="0" fill="#ce9178"  opacity="0.28"/><rect x="1805.0" y="126.5" width="8.0" height="1.3" rx="0" fill="#ce9178"  opacity="0.62"/><rect x="1813.0" y="126.5" width="1.0" height="1.3" rx="0" fill="#ce9178"  opacity="0.28"/><rect x="1814.0" y="126.5" width="5.0" height="1.3" rx="0" fill="#ce9178"  opacity="0.62"/><rect x="1819.0" y="126.5" width="1.0" height="1.3" rx="0" fill="#ce9178"  opacity="0.28"/><rect x="1820.0" y="126.5" width="6.0" height="1.3" rx="0" fill="#ce9178"  opacity="0.62"/><rect x="1826.0" y="126.5" width="1.0" height="1.3" rx="0" fill="#ce9178"  opacity="0.28"/><rect x="1827.0" y="126.5" width="5.0" height="1.3" rx="0" fill="#ce9178"  opacity="0.62"/><rect x="1832.0" y="126.5" width="1.0" height="1.3" rx="0" fill="#ce9178"  opacity="0.28"/><rect x="1833.0" y="126.5" width="1.0" height="1.3" rx="0" fill="#d4d4d4"  opacity="0.28"/><rect x="1795.0" y="128.5" width="1.0" height="1.3" rx="0" fill="#ce9178"  opacity="0.28"/><rect x="1796.0" y="128.5" width="8.0" height="1.3" rx="0" fill="#ce9178"  opacity="0.62"/><rect x="1804.0" y="128.5" width="1.0" height="1.3" rx="0" fill="#ce9178"  opacity="0.28"/><rect x="1805.0" y="128.5" width="2.0" height="1.3" rx="0" fill="#d4d4d4"  opacity="0.45"/><rect x="1807.0" y="128.5" width="1.0" height="1.3" rx="0" fill="#ce9178"  opacity="0.28"/><rect x="1808.0" y="128.5" width="8.0" height="1.3" rx="0" fill="#ce9178"  opacity="0.62"/><rect x="1816.0" y="128.5" width="1.0" height="1.3" rx="0" fill="#ce9178"  opacity="0.28"/><rect x="1817.0" y="128.5" width="6.0" height="1.3" rx="0" fill="#ce9178"  opacity="0.62"/><rect x="1823.0" y="128.5" width="1.0" height="1.3" rx="0" fill="#ce9178"  opacity="0.28"/><rect x="1824.0" y="128.5" width="1.0" height="1.3" rx="0" fill="#d4d4d4"  opacity="0.28"/><rect x="1795.0" y="130.5" width="1.0" height="1.3" rx="0" fill="#ce9178"  opacity="0.28"/><rect x="1796.0" y="130.5" width="6.0" height="1.3" rx="0" fill="#ce9178"  opacity="0.62"/><rect x="1802.0" y="130.5" width="1.0" height="1.3" rx="0" fill="#ce9178"  opacity="0.28"/><rect x="1803.0" y="130.5" width="2.0" height="1.3" rx="0" fill="#d4d4d4"  opacity="0.45"/><rect x="1805.0" y="130.5" width="1.0" height="1.3" rx="0" fill="#ce9178"  opacity="0.28"/><rect x="1806.0" y="130.5" width="8.0" height="1.3" rx="0" fill="#ce9178"  opacity="0.62"/><rect x="1814.0" y="130.5" width="1.0" height="1.3" rx="0" fill="#ce9178"  opacity="0.28"/><rect x="1815.0" y="130.5" width="6.0" height="1.3" rx="0" fill="#ce9178"  opacity="0.62"/><rect x="1821.0" y="130.5" width="1.0" height="1.3" rx="0" fill="#ce9178"  opacity="0.28"/><rect x="1822.0" y="130.5" width="5.0" height="1.3" rx="0" fill="#ce9178"  opacity="0.62"/><rect x="1827.0" y="130.5" width="1.0" height="1.3" rx="0" fill="#ce9178"  opacity="0.28"/><rect x="1828.0" y="130.5" width="1.0" height="1.3" rx="0" fill="#d4d4d4"  opacity="0.28"/><rect x="1795.0" y="132.5" width="1.0" height="1.3" rx="0" fill="#ce9178"  opacity="0.28"/><rect x="1796.0" y="132.5" width="4.0" height="1.3" rx="0" fill="#ce9178"  opacity="0.62"/><rect x="1800.0" y="132.5" width="1.0" height="1.3" rx="0" fill="#ce9178"  opacity="0.45"/><rect x="1801.0" y="132.5" width="4.0" height="1.3" rx="0" fill="#ce9178"  opacity="0.62"/><rect x="1805.0" y="132.5" width="1.0" height="1.3" rx="0" fill="#ce9178"  opacity="0.28"/><rect x="1806.0" y="132.5" width="2.0" height="1.3" rx="0" fill="#d4d4d4"  opacity="0.45"/><rect x="1808.0" y="132.5" width="1.0" height="1.3" rx="0" fill="#ce9178"  opacity="0.28"/><rect x="1809.0" y="132.5" width="8.0" height="1.3" rx="0" fill="#ce9178"  opacity="0.62"/><rect x="1817.0" y="132.5" width="1.0" height="1.3" rx="0" fill="#ce9178"  opacity="0.28"/><rect x="1818.0" y="132.5" width="6.0" height="1.3" rx="0" fill="#ce9178"  opacity="0.62"/><rect x="1824.0" y="132.5" width="1.0" height="1.3" rx="0" fill="#ce9178"  opacity="0.28"/><rect x="1825.0" y="132.5" width="2.0" height="1.3" rx="0" fill="#ce9178"  opacity="0.62"/><rect x="1827.0" y="132.5" width="1.0" height="1.3" rx="0" fill="#ce9178"  opacity="0.28"/><rect x="1828.0" y="132.5" width="4.0" height="1.3" rx="0" fill="#ce9178"  opacity="0.62"/><rect x="1832.0" y="132.5" width="1.0" height="1.3" rx="0" fill="#ce9178"  opacity="0.28"/><rect x="1833.0" y="132.5" width="5.0" height="1.3" rx="0" fill="#ce9178"  opacity="0.62"/><rect x="1838.0" y="132.5" width="1.0" height="1.3" rx="0" fill="#ce9178"  opacity="0.28"/><rect x="1839.0" y="132.5" width="1.0" height="1.3" rx="0" fill="#d4d4d4"  opacity="0.28"/><rect x="1791.0" y="134.5" width="1.0" height="1.3" rx="0" fill="#da70d6"  opacity="0.45"/><rect x="1792.0" y="134.5" width="1.0" height="1.3" rx="0" fill="#d4d4d4"  opacity="0.28"/><rect x="1793.0" y="134.5" width="1.0" height="1.3" rx="0" fill="#da70d6"  opacity="0.45"/><rect x="1795.0" y="136.5" width="1.0" height="1.3" rx="0" fill="#ce9178"  opacity="0.28"/><rect x="1796.0" y="136.5" width="4.0" height="1.3" rx="0" fill="#ce9178"  opacity="0.62"/><rect x="1800.0" y="136.5" width="1.0" height="1.3" rx="0" fill="#ce9178"  opacity="0.28"/><rect x="1801.0" y="136.5" width="2.0" height="1.3" rx="0" fill="#d4d4d4"  opacity="0.45"/><rect x="1803.0" y="136.5" width="5.0" height="1.3" rx="0" fill="#dcdcaa"  opacity="0.62"/><rect x="1808.0" y="136.5" width="1.0" height="1.3" rx="0" fill="#179fff"  opacity="0.45"/><rect x="1809.0" y="136.5" width="1.0" height="1.3" rx="0" fill="#ce9178"  opacity="0.28"/><rect x="1810.0" y="136.5" width="5.0" height="1.3" rx="0" fill="#ce9178"  opacity="0.62"/><rect x="1815.0" y="136.5" width="1.0" height="1.3" rx="0" fill="#ce9178"  opacity="0.28"/><rect x="1816.0" y="136.5" width="4.0" height="1.3" rx="0" fill="#ce9178"  opacity="0.62"/><rect x="1820.0" y="136.5" width="1.0" height="1.3" rx="0" fill="#ce9178"  opacity="0.28"/><rect x="1821.0" y="136.5" width="1.0" height="1.3" rx="0" fill="#179fff"  opacity="0.45"/><rect x="1822.0" y="136.5" width="1.0" height="1.3" rx="0" fill="#d4d4d4"  opacity="0.28"/><rect x="1795.0" y="138.5" width="1.0" height="1.3" rx="0" fill="#ce9178"  opacity="0.28"/><rect x="1796.0" y="138.5" width="5.0" height="1.3" rx="0" fill="#ce9178"  opacity="0.62"/><rect x="1801.0" y="138.5" width="1.0" height="1.3" rx="0" fill="#ce9178"  opacity="0.28"/><rect x="1802.0" y="138.5" width="2.0" height="1.3" rx="0" fill="#d4d4d4"  opacity="0.45"/><rect x="1804.0" y="138.5" width="5.0" height="1.3" rx="0" fill="#dcdcaa"  opacity="0.62"/><rect x="1809.0" y="138.5" width="1.0" height="1.3" rx="0" fill="#179fff"  opacity="0.45"/><rect x="1810.0" y="138.5" width="1.0" height="1.3" rx="0" fill="#ce9178"  opacity="0.28"/><rect x="1811.0" y="138.5" width="5.0" height="1.3" rx="0" fill="#ce9178"  opacity="0.62"/><rect x="1816.0" y="138.5" width="1.0" height="1.3" rx="0" fill="#ce9178"  opacity="0.28"/><rect x="1817.0" y="138.5" width="5.0" height="1.3" rx="0" fill="#ce9178"  opacity="0.62"/><rect x="1822.0" y="138.5" width="1.0" height="1.3" rx="0" fill="#ce9178"  opacity="0.28"/><rect x="1823.0" y="138.5" width="1.0" height="1.3" rx="0" fill="#179fff"  opacity="0.45"/><rect x="1824.0" y="138.5" width="1.0" height="1.3" rx="0" fill="#d4d4d4"  opacity="0.28"/><rect x="1795.0" y="140.5" width="1.0" height="1.3" rx="0" fill="#ce9178"  opacity="0.28"/><rect x="1796.0" y="140.5" width="8.0" height="1.3" rx="0" fill="#ce9178"  opacity="0.62"/><rect x="1804.0" y="140.5" width="1.0" height="1.3" rx="0" fill="#ce9178"  opacity="0.28"/><rect x="1805.0" y="140.5" width="2.0" height="1.3" rx="0" fill="#d4d4d4"  opacity="0.45"/><rect x="1807.0" y="140.5" width="5.0" height="1.3" rx="0" fill="#dcdcaa"  opacity="0.62"/><rect x="1812.0" y="140.5" width="1.0" height="1.3" rx="0" fill="#179fff"  opacity="0.45"/><rect x="1813.0" y="140.5" width="1.0" height="1.3" rx="0" fill="#ce9178"  opacity="0.28"/><rect x="1814.0" y="140.5" width="5.0" height="1.3" rx="0" fill="#ce9178"  opacity="0.62"/><rect x="1819.0" y="140.5" width="1.0" height="1.3" rx="0" fill="#ce9178"  opacity="0.28"/><rect x="1820.0" y="140.5" width="8.0" height="1.3" rx="0" fill="#ce9178"  opacity="0.62"/><rect x="1828.0" y="140.5" width="1.0" height="1.3" rx="0" fill="#ce9178"  opacity="0.28"/><rect x="1829.0" y="140.5" width="1.0" height="1.3" rx="0" fill="#179fff"  opacity="0.45"/><rect x="1830.0" y="140.5" width="1.0" height="1.3" rx="0" fill="#d4d4d4"  opacity="0.28"/><rect x="1795.0" y="142.5" width="1.0" height="1.3" rx="0" fill="#ce9178"  opacity="0.28"/><rect x="1796.0" y="142.5" width="6.0" height="1.3" rx="0" fill="#ce9178"  opacity="0.62"/><rect x="1802.0" y="142.5" width="1.0" height="1.3" rx="0" fill="#ce9178"  opacity="0.28"/><rect x="1803.0" y="142.5" width="2.0" height="1.3" rx="0" fill="#d4d4d4"  opacity="0.45"/><rect x="1805.0" y="142.5" width="5.0" height="1.3" rx="0" fill="#dcdcaa"  opacity="0.62"/><rect x="1810.0" y="142.5" width="1.0" height="1.3" rx="0" fill="#179fff"  opacity="0.45"/><rect x="1811.0" y="142.5" width="1.0" height="1.3" rx="0" fill="#ce9178"  opacity="0.28"/><rect x="1812.0" y="142.5" width="5.0" height="1.3" rx="0" fill="#ce9178"  opacity="0.62"/><rect x="1817.0" y="142.5" width="1.0" height="1.3" rx="0" fill="#ce9178"  opacity="0.28"/><rect x="1818.0" y="142.5" width="6.0" height="1.3" rx="0" fill="#ce9178"  opacity="0.62"/><rect x="1824.0" y="142.5" width="1.0" height="1.3" rx="0" fill="#ce9178"  opacity="0.28"/><rect x="1825.0" y="142.5" width="1.0" height="1.3" rx="0" fill="#179fff"  opacity="0.45"/><rect x="1826.0" y="142.5" width="1.0" height="1.3" rx="0" fill="#d4d4d4"  opacity="0.28"/><rect x="1795.0" y="144.5" width="1.0" height="1.3" rx="0" fill="#ce9178"  opacity="0.28"/><rect x="1796.0" y="144.5" width="4.0" height="1.3" rx="0" fill="#ce9178"  opacity="0.62"/><rect x="1800.0" y="144.5" width="1.0" height="1.3" rx="0" fill="#ce9178"  opacity="0.45"/><rect x="1801.0" y="144.5" width="4.0" height="1.3" rx="0" fill="#ce9178"  opacity="0.62"/><rect x="1805.0" y="144.5" width="1.0" height="1.3" rx="0" fill="#ce9178"  opacity="0.28"/><rect x="1806.0" y="144.5" width="2.0" height="1.3" rx="0" fill="#d4d4d4"  opacity="0.45"/><rect x="1808.0" y="144.5" width="5.0" height="1.3" rx="0" fill="#dcdcaa"  opacity="0.62"/><rect x="1813.0" y="144.5" width="1.0" height="1.3" rx="0" fill="#179fff"  opacity="0.45"/><rect x="1814.0" y="144.5" width="1.0" height="1.3" rx="0" fill="#ce9178"  opacity="0.28"/><rect x="1815.0" y="144.5" width="5.0" height="1.3" rx="0" fill="#ce9178"  opacity="0.62"/><rect x="1820.0" y="144.5" width="1.0" height="1.3" rx="0" fill="#ce9178"  opacity="0.28"/><rect x="1821.0" y="144.5" width="4.0" height="1.3" rx="0" fill="#ce9178"  opacity="0.62"/><rect x="1825.0" y="144.5" width="1.0" height="1.3" rx="0" fill="#ce9178"  opacity="0.45"/><rect x="1826.0" y="144.5" width="4.0" height="1.3" rx="0" fill="#ce9178"  opacity="0.62"/><rect x="1830.0" y="144.5" width="1.0" height="1.3" rx="0" fill="#ce9178"  opacity="0.28"/><rect x="1831.0" y="144.5" width="1.0" height="1.3" rx="0" fill="#179fff"  opacity="0.45"/><rect x="1832.0" y="144.5" width="1.0" height="1.3" rx="0" fill="#d4d4d4"  opacity="0.28"/><rect x="1791.0" y="148.5" width="1.0" height="1.3" rx="0" fill="#da70d6"  opacity="0.45"/><rect x="1792.0" y="148.5" width="1.0" height="1.3" rx="0" fill="#ffd700"  opacity="0.45"/><rect x="1793.0" y="148.5" width="1.0" height="1.3" rx="0" fill="#d4d4d4"  opacity="0.28"/><rect x="1791.0" y="152.5" width="1.0" height="1.3" rx="0" fill="#9cdcfe"  opacity="0.45"/><rect x="1792.0" y="152.5" width="4.0" height="1.3" rx="0" fill="#9cdcfe"  opacity="0.62"/><rect x="1796.0" y="152.5" width="1.0" height="1.3" rx="0" fill="#ffd700"  opacity="0.45"/><rect x="1797.0" y="152.5" width="1.0" height="1.3" rx="0" fill="#ce9178"  opacity="0.28"/><rect x="1798.0" y="152.5" width="8.0" height="1.3" rx="0" fill="#ce9178"  opacity="0.62"/><rect x="1806.0" y="152.5" width="1.0" height="1.3" rx="0" fill="#ce9178"  opacity="0.28"/><rect x="1807.0" y="152.5" width="1.0" height="1.3" rx="0" fill="#ffd700"  opacity="0.45"/><rect x="1808.0" y="152.5" width="1.0" height="1.3" rx="0" fill="#d4d4d4"  opacity="0.45"/><rect x="1809.0" y="152.5" width="6.0" height="1.3" rx="0" fill="#dcdcaa"  opacity="0.62"/><rect x="1815.0" y="152.5" width="1.0" height="1.3" rx="0" fill="#ffd700"  opacity="0.45"/><rect x="1816.0" y="152.5" width="1.0" height="1.3" rx="0" fill="#9cdcfe"  opacity="0.45"/><rect x="1817.0" y="152.5" width="4.0" height="1.3" rx="0" fill="#9cdcfe"  opacity="0.62"/><rect x="1821.0" y="152.5" width="1.0" height="1.3" rx="0" fill="#da70d6"  opacity="0.45"/><rect x="1822.0" y="152.5" width="1.0" height="1.3" rx="0" fill="#ce9178"  opacity="0.28"/><rect x="1823.0" y="152.5" width="8.0" height="1.3" rx="0" fill="#ce9178"  opacity="0.62"/><rect x="1831.0" y="152.5" width="1.0" height="1.3" rx="0" fill="#ce9178"  opacity="0.28"/><rect x="1832.0" y="152.5" width="1.0" height="1.3" rx="0" fill="#da70d6"  opacity="0.45"/><rect x="1833.0" y="152.5" width="1.0" height="1.3" rx="0" fill="#ffd700"  opacity="0.45"/><rect x="1834.0" y="152.5" width="1.0" height="1.3" rx="0" fill="#d4d4d4"  opacity="0.28"/><rect x="1791.0" y="156.5" width="2.0" height="1.3" rx="0" fill="#dcdcaa"  opacity="0.62"/><rect x="1793.0" y="156.5" width="1.0" height="1.3" rx="0" fill="#dcdcaa"  opacity="0.45"/><rect x="1794.0" y="156.5" width="6.0" height="1.3" rx="0" fill="#dcdcaa"  opacity="0.62"/><rect x="1800.0" y="156.5" width="1.0" height="1.3" rx="0" fill="#ffd700"  opacity="0.45"/><rect x="1801.0" y="156.5" width="1.0" height="1.3" rx="0" fill="#ce9178"  opacity="0.28"/><rect x="1802.0" y="156.5" width="5.0" height="1.3" rx="0" fill="#ce9178"  opacity="0.62"/><rect x="1807.0" y="156.5" width="1.0" height="1.3" rx="0" fill="#ce9178"  opacity="0.28"/><rect x="1808.0" y="156.5" width="1.0" height="1.3" rx="0" fill="#d4d4d4"  opacity="0.28"/><rect x="1809.0" y="156.5" width="1.0" height="1.3" rx="0" fill="#9cdcfe"  opacity="0.45"/><rect x="1810.0" y="156.5" width="4.0" height="1.3" rx="0" fill="#9cdcfe"  opacity="0.62"/><rect x="1814.0" y="156.5" width="1.0" height="1.3" rx="0" fill="#ffd700"  opacity="0.45"/><rect x="1815.0" y="156.5" width="1.0" height="1.3" rx="0" fill="#d4d4d4"  opacity="0.28"/><rect x="1791.0" y="160.5" width="8.0" height="1.3" rx="0" fill="#dcdcaa"  opacity="0.62"/><rect x="1799.0" y="160.5" width="1.0" height="1.3" rx="0" fill="#ffd700"  opacity="0.45"/><rect x="1800.0" y="160.5" width="4.0" height="1.3" rx="0" fill="#dcdcaa"  opacity="0.62"/><rect x="1804.0" y="160.5" width="1.0" height="1.3" rx="0" fill="#da70d6"  opacity="0.45"/><rect x="1805.0" y="160.5" width="1.0" height="1.3" rx="0" fill="#ce9178"  opacity="0.28"/><rect x="1806.0" y="160.5" width="5.0" height="1.3" rx="0" fill="#ce9178"  opacity="0.62"/><rect x="1811.0" y="160.5" width="1.0" height="1.3" rx="0" fill="#ce9178"  opacity="0.28"/><rect x="1812.0" y="160.5" width="1.0" height="1.3" rx="0" fill="#da70d6"  opacity="0.45"/><rect x="1813.0" y="160.5" width="1.0" height="1.3" rx="0" fill="#ffd700"  opacity="0.45"/><rect x="1814.0" y="160.5" width="1.0" height="1.3" rx="0" fill="#d4d4d4"  opacity="0.28"/><path d="M1920,441 H1903 Q1897,441 1897,447 V551 Q1897,557 1903,557 H1920 Z" fill="#1a1a1a"  /><circle cx="1908.6" cy="452" r="5.6" fill="#e02a20"  /><circle cx="1908.6" cy="452" r="6.8" fill="none" stroke="#e86a50" stroke-width="0.8" /><text transform="translate(1902.8,466.8) rotate(90)" font-family="'Liberation Sans',sans-serif" font-size="22" fill="#ffffff" textLength="57.6" lengthAdjust="spacingAndGlyphs">screen</text><text transform="translate(1902.8,529) rotate(90)" font-family="'Liberation Sans',sans-serif" font-size="22" font-weight="700" fill="#ffffff" textLength="25.4" lengthAdjust="spacingAndGlyphs">rec</text><g opacity="0.37" fill="#dedede"><text x="959.6" y="1014" text-anchor="middle" font-family="'DejaVu Sans','Liberation Sans',sans-serif" font-weight="700" font-size="82" textLength="230" lengthAdjust="spacingAndGlyphs">مستقل</text><text x="845.4" y="1049.6" font-family="'Liberation Sans',sans-serif" font-weight="700" font-size="35" textLength="229" lengthAdjust="spacingAndGlyphs">mostaql.com</text></g></svg>
</div></body></html>
